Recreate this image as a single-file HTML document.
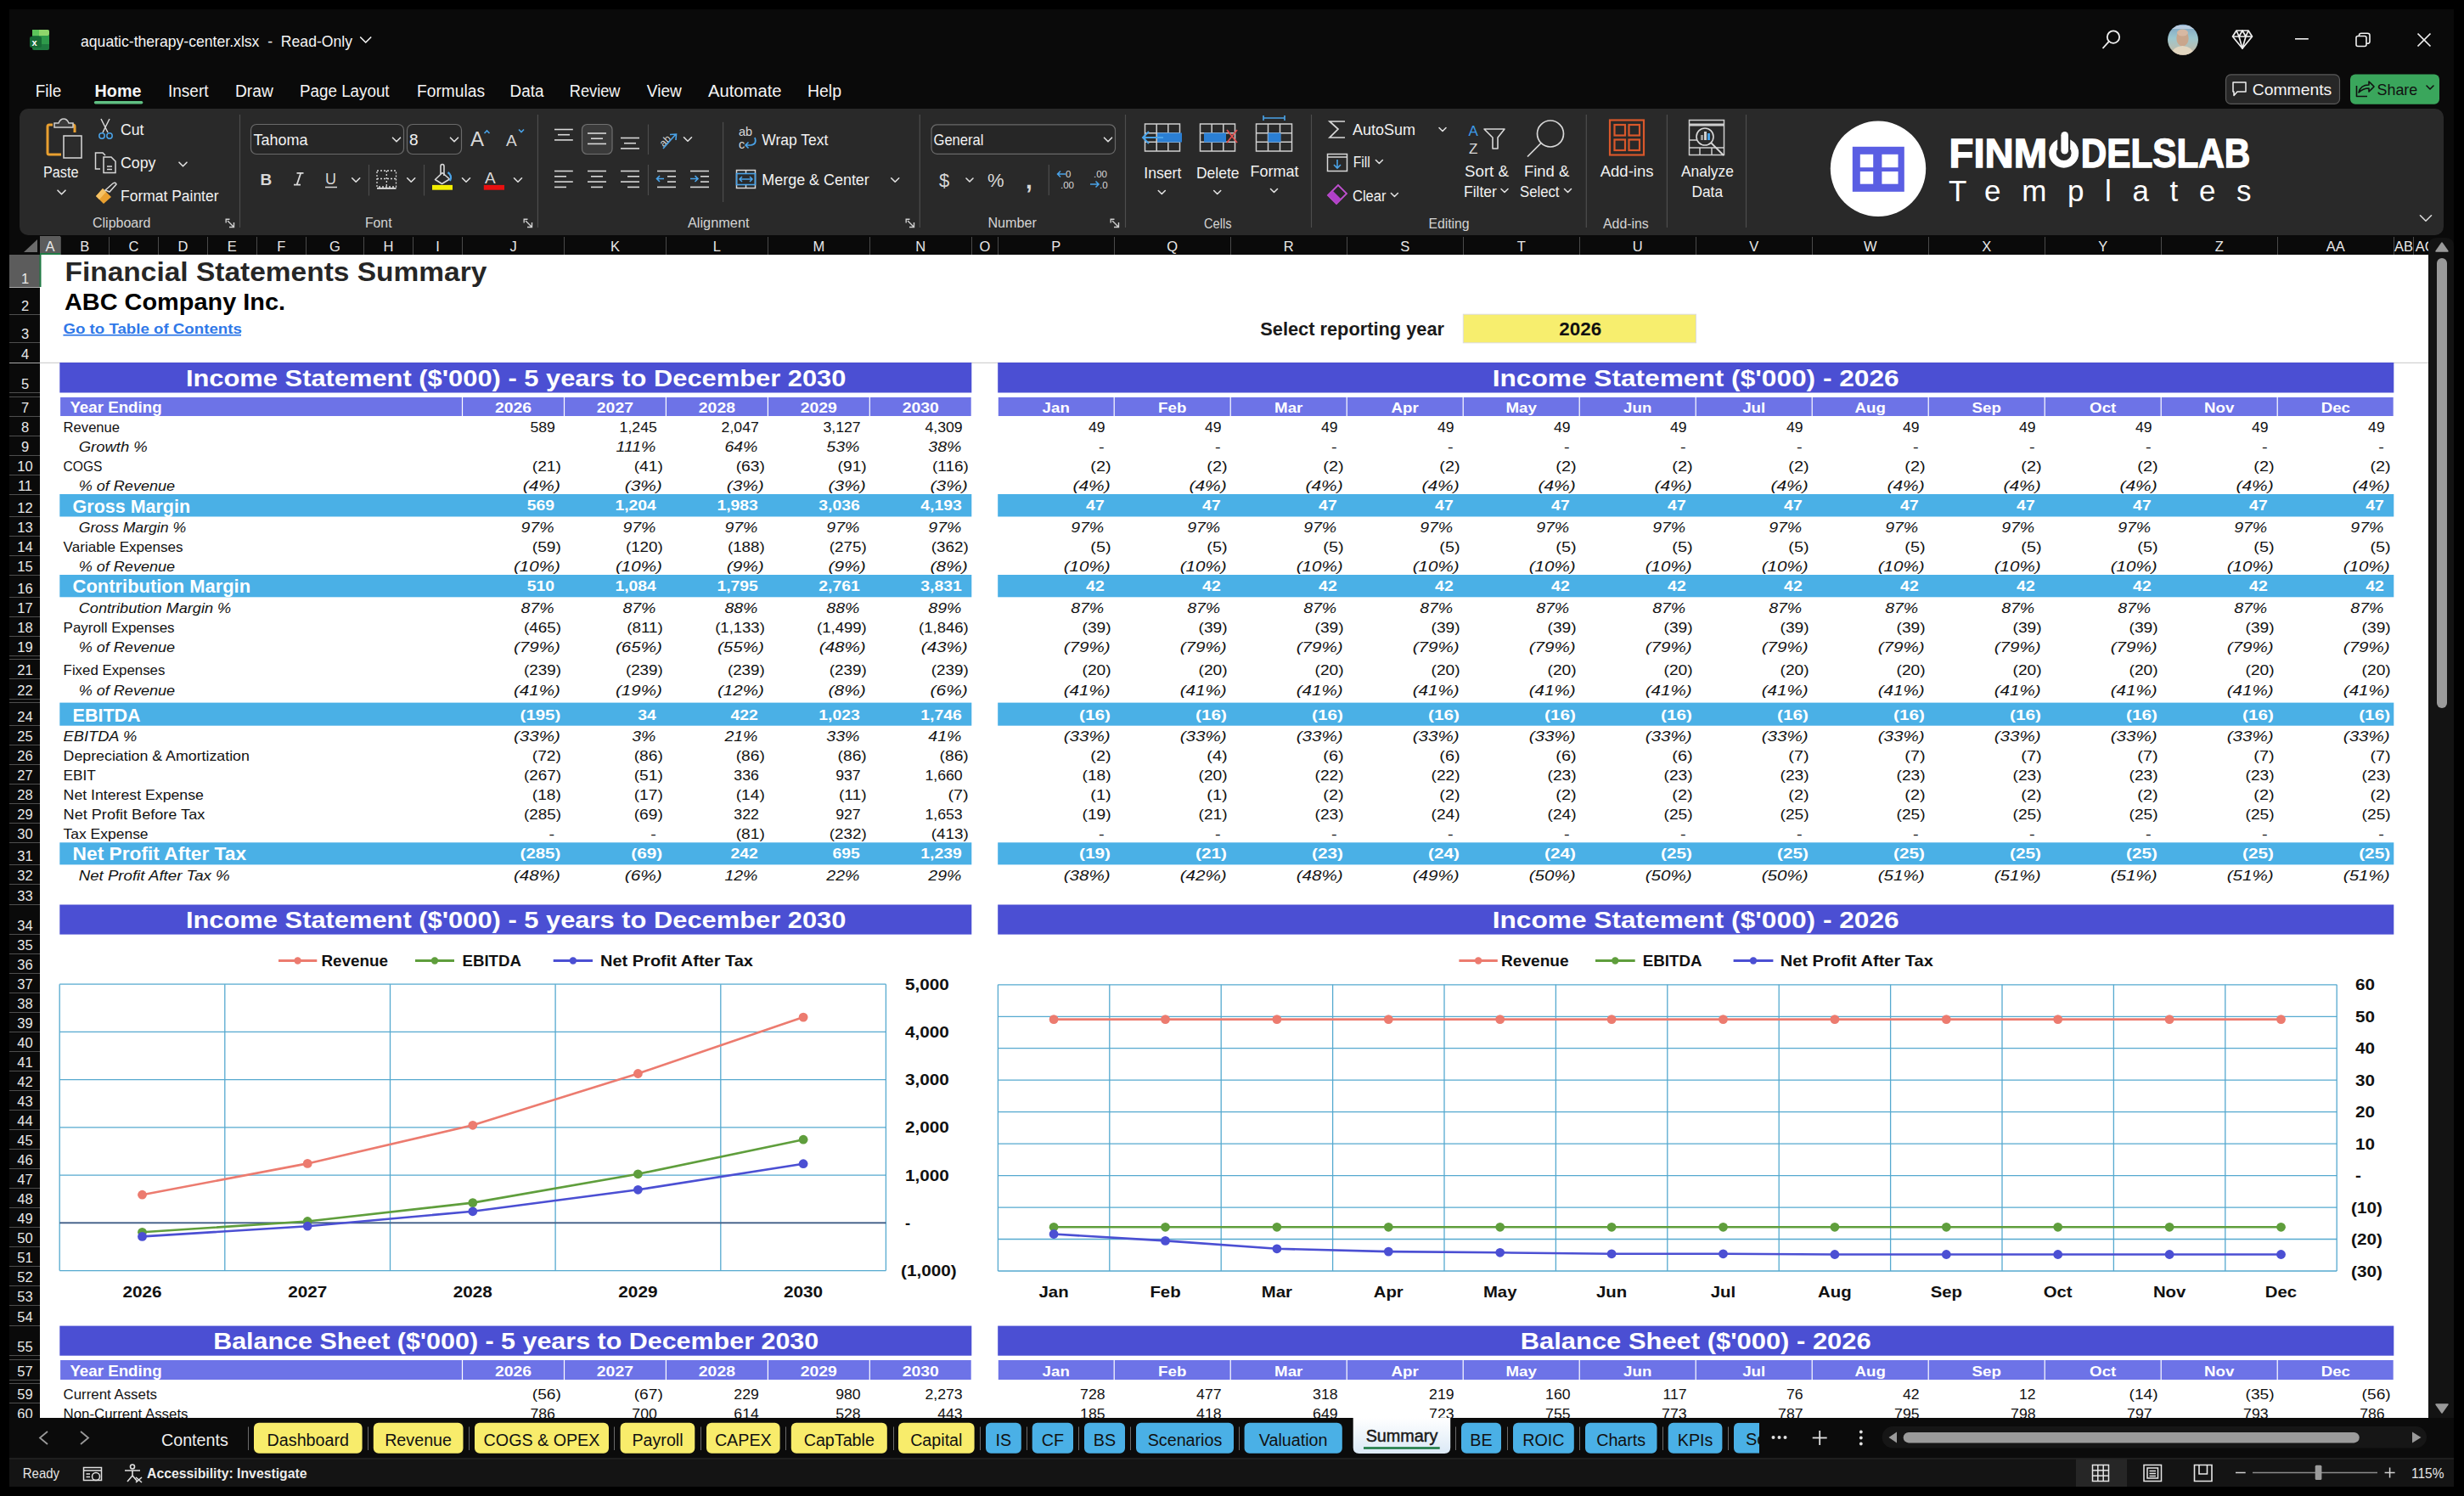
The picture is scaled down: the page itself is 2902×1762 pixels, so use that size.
<!DOCTYPE html><html><head><meta charset="utf-8"><title>aquatic-therapy-center.xlsx</title>
<style>html,body{margin:0;padding:0;background:#000;overflow:hidden;width:2902px;height:1762px;}svg text{font-family:"Liberation Sans",sans-serif;}</style></head><body>
<svg width="2902" height="1762" viewBox="0 0 2902 1762" style="position:absolute;left:0;top:0;font-family:"Liberation Sans", sans-serif">
<rect x="0.0" y="0.0" width="2902.0" height="1762.0" fill="#000" />
<rect x="11.0" y="11.0" width="2879.0" height="1740.0" fill="#0a0a0a" />
<rect x="23" y="128" width="2855" height="149" rx="10" fill="#292929"/>
<g><rect x="38" y="35" width="20" height="24" rx="2" fill="#1f7a3f"/><rect x="38" y="35" width="20" height="7" rx="2" fill="#8fd66b"/><rect x="38" y="35" width="8" height="7" fill="#5bc55a"/><rect x="46" y="42" width="12" height="10" fill="#2e9a4a"/><rect x="35" y="43" width="14" height="13" rx="2" fill="#176b35"/><text x="37.6" y="53.6" font-size="11" font-weight="bold" fill="#fff">x</text></g>
<text x="95.0" y="54.5" font-size="19" fill="#f5f5f5" textLength="320.0" lengthAdjust="spacingAndGlyphs" xml:space="preserve">aquatic-therapy-center.xlsx  -  Read-Only</text>
<path d="M424.7 44.0 L430.7 50.0 L436.7 44.0" fill="none" stroke="#f0f0f0" stroke-width="1.7" stroke-linecap="round" stroke-linejoin="round"/>
<g fill="none" stroke="#f0f0f0" stroke-width="1.8"><circle cx="2489" cy="43.6" r="7.2"/><line x1="2483.8" y1="48.8" x2="2476.5" y2="57"/></g>
<defs><linearGradient id="avg" x1="0" y1="0" x2="0" y2="1"><stop offset="0" stop-color="#7da0c0"/><stop offset="0.45" stop-color="#9cc7cf"/><stop offset="1" stop-color="#c9b8a0"/></linearGradient></defs>
<clipPath id="avc"><circle cx="2571" cy="46.8" r="18"/></clipPath><g clip-path="url(#avc)"><rect x="2553" y="28" width="36" height="37" fill="url(#avg)"/><rect x="2553" y="30" width="36" height="4" fill="#b9cde0"/><ellipse cx="2570.5" cy="45" rx="7.2" ry="9.5" fill="#c9a68c"/><ellipse cx="2570.5" cy="38.5" rx="6.5" ry="4" fill="#d7b8a2"/><path d="M2556 66 Q2558 55 2570.5 54 Q2583 55 2585 66 Z" fill="#e2d6c0"/></g>
<g fill="none" stroke="#f0f0f0" stroke-width="1.7" stroke-linejoin="round"><path d="M2634 36 L2648 36 L2652.5 43 L2641 57 L2629.5 43 Z"/><path d="M2629.5 43 L2652.5 43 M2637 43 L2641 57 L2645 43 M2634 36 L2637 43 L2641 36 L2645 43 L2648 36"/></g>
<line x1="2703.0" y1="45.8" x2="2718.8" y2="45.8" stroke="#f0f0f0" stroke-width="1.6" />
<g fill="none" stroke="#f0f0f0" stroke-width="1.6"><rect x="2775" y="42.5" width="12" height="12" rx="2"/><path d="M2778.5 42.5 L2778.5 41.5 Q2778.5 39.3 2781 39.3 L2788.5 39.3 Q2791 39.3 2791 41.8 L2791 49 Q2791 51.3 2788 51.3 L2787 51.3"/></g>
<g stroke="#f0f0f0" stroke-width="1.7"><line x1="2847.5" y1="39.5" x2="2862.5" y2="54.5"/><line x1="2862.5" y1="39.5" x2="2847.5" y2="54.5"/></g>
<rect x="2621.5" y="87.9" width="134" height="34.5" rx="6" fill="#272727" stroke="#5a5a5a" stroke-width="1.2"/>
<path d="M2630 97 L2645 97 L2645 108 L2635 108 L2631 112.5 L2631 108 L2630 108 Z" fill="none" stroke="#f0f0f0" stroke-width="1.5" stroke-linejoin="round"/>
<text x="2652.7" y="111.5" font-size="19" fill="#f5f5f5" textLength="93.6" lengthAdjust="spacingAndGlyphs">Comments</text>
<rect x="2768" y="87.4" width="105" height="35.4" rx="6" fill="#3aa65c"/>
<g fill="none" stroke="#111" stroke-width="1.6" stroke-linejoin="round"><path d="M2775.5 101 L2775.5 113.5 L2788 113.5"/><path d="M2778 109 Q2780 100 2790 100 L2790 96 L2796 102 L2790 108 L2790 104 Q2783 104 2778 109 Z"/></g>
<text x="2799.5" y="111.5" font-size="19" fill="#111" textLength="47.8" lengthAdjust="spacingAndGlyphs">Share</text>
<path d="M2858.0 101.0 L2862.0 105.0 L2866.0 101.0" fill="none" stroke="#111" stroke-width="1.6" stroke-linecap="round" stroke-linejoin="round"/>
<text x="41.8" y="113.8" font-size="19.5" fill="#f5f5f5" textLength="30.4" lengthAdjust="spacingAndGlyphs">File</text>
<text x="111.6" y="113.8" font-size="19.5" fill="#f5f5f5" font-weight="bold" textLength="54.8" lengthAdjust="spacingAndGlyphs">Home</text>
<text x="198.0" y="113.8" font-size="19.5" fill="#f5f5f5" textLength="47.5" lengthAdjust="spacingAndGlyphs">Insert</text>
<text x="277.0" y="113.8" font-size="19.5" fill="#f5f5f5" textLength="44.8" lengthAdjust="spacingAndGlyphs">Draw</text>
<text x="353.0" y="113.8" font-size="19.5" fill="#f5f5f5" textLength="105.6" lengthAdjust="spacingAndGlyphs">Page Layout</text>
<text x="491.0" y="113.8" font-size="19.5" fill="#f5f5f5" textLength="80.0" lengthAdjust="spacingAndGlyphs">Formulas</text>
<text x="600.6" y="113.8" font-size="19.5" fill="#f5f5f5" textLength="39.8" lengthAdjust="spacingAndGlyphs">Data</text>
<text x="670.8" y="113.8" font-size="19.5" fill="#f5f5f5" textLength="59.7" lengthAdjust="spacingAndGlyphs">Review</text>
<text x="761.8" y="113.8" font-size="19.5" fill="#f5f5f5" textLength="41.0" lengthAdjust="spacingAndGlyphs">View</text>
<text x="834.0" y="113.8" font-size="19.5" fill="#f5f5f5" textLength="86.5" lengthAdjust="spacingAndGlyphs">Automate</text>
<text x="951.0" y="113.8" font-size="19.5" fill="#f5f5f5" textLength="40.0" lengthAdjust="spacingAndGlyphs">Help</text>
<rect x="110.8" y="119" width="57.6" height="3.6" rx="1.8" fill="#5fbf82"/>
<g><path d="M62 147 L58 147 Q56 147 56 149 L56 180 Q56 182 58 182 L72 182" fill="none" stroke="#e9a030" stroke-width="3"/><path d="M82 147 L86 147 Q88 147 88 149 L88 156" fill="none" stroke="#e9a030" stroke-width="3"/><path d="M64 150 L64 145 L69 145 Q71 140 75 140 Q79 140 81 145 L86 145 L86 150 Z" fill="#3a3a3a" stroke="#cfcfcf" stroke-width="1.5"/><rect x="75" y="160" width="21" height="26" fill="#2b2b2b" stroke="#cfcfcf" stroke-width="1.6"/></g>
<text x="51.0" y="209.0" font-size="18" fill="#f2f2f2" textLength="41.5" lengthAdjust="spacingAndGlyphs">Paste</text>
<path d="M68.0 224.2 L72.5 228.8 L77.0 224.2" fill="none" stroke="#e0e0e0" stroke-width="1.6" stroke-linecap="round" stroke-linejoin="round"/>
<g fill="none" stroke-width="1.5"><path d="M119 140 L127 156 M129 140 L121 156" stroke="#d8d8d8"/><circle cx="120" cy="160" r="3.2" stroke="#4aa3e8"/><circle cx="129" cy="160" r="3.2" stroke="#4aa3e8"/></g>
<text x="142.0" y="158.5" font-size="18" fill="#f2f2f2" textLength="27.5" lengthAdjust="spacingAndGlyphs">Cut</text>
<g fill="none" stroke="#d8d8d8" stroke-width="1.5"><path d="M118 199 L112.5 199 L112.5 180 L121 180 L124 183"/><path d="M122 185 L131 185 L136 190 L136 203.5 L122 203.5 Z"/><path d="M126 196 L132 196 M126 199.5 L132 199.5"/></g>
<text x="142.0" y="198.0" font-size="18" fill="#f2f2f2" textLength="41.5" lengthAdjust="spacingAndGlyphs">Copy</text>
<path d="M211.0 191.2 L215.5 195.8 L220.0 191.2" fill="none" stroke="#e0e0e0" stroke-width="1.6" stroke-linecap="round" stroke-linejoin="round"/>
<g><path d="M113 231 L121 222 L131 232 L122 240 Z" fill="#e9a030"/><path d="M113 231 L121 222 L125 226 L117 235 Z" fill="#f5c264"/><path d="M124 224 L133 216 Q136 214 137 217 L129 226 Z" fill="none" stroke="#d8d8d8" stroke-width="1.5"/></g>
<text x="142.0" y="237.0" font-size="18" fill="#f2f2f2" textLength="115.5" lengthAdjust="spacingAndGlyphs">Format Painter</text>
<text x="109.0" y="268.0" font-size="16" fill="#d4d4d4" textLength="68.5" lengthAdjust="spacingAndGlyphs">Clipboard</text>
<g fill="none" stroke="#d0d0d0" stroke-width="1.4"><path d="M270.5 258.2 L266.2 258.2 L266.2 262.5"/><path d="M268.0 260.0 L275.5 267.5 M275.5 262.0 L275.5 267.5 L270.0 267.5"/></g>
<line x1="282.5" y1="135.0" x2="282.5" y2="268.0" stroke="#4d4d4d" stroke-width="1.2" />
<rect x="295.5" y="146.5" width="180" height="35" rx="6.5" fill="#262626" stroke="#6a6a6a" stroke-width="1.2"/>
<text x="298.5" y="171.3" font-size="19" fill="#f2f2f2" textLength="64.0" lengthAdjust="spacingAndGlyphs">Tahoma</text>
<path d="M462.5 162.2 L467.0 166.8 L471.5 162.2" fill="none" stroke="#e0e0e0" stroke-width="1.6" stroke-linecap="round" stroke-linejoin="round"/>
<rect x="479.5" y="146.5" width="64" height="35" rx="6.5" fill="#262626" stroke="#6a6a6a" stroke-width="1.2"/>
<text x="482.0" y="171.3" font-size="19" fill="#f2f2f2" textLength="10.6" lengthAdjust="spacingAndGlyphs">8</text>
<path d="M530.5 162.2 L535.0 166.8 L539.5 162.2" fill="none" stroke="#e0e0e0" stroke-width="1.6" stroke-linecap="round" stroke-linejoin="round"/>
<text x="554.0" y="172.0" font-size="24" fill="#d8d8d8">A</text>
<path d="M570.5 157 L573.5 154 L576.5 157" fill="none" stroke="#4aa3e8" stroke-width="1.6"/>
<text x="596.0" y="172.0" font-size="19" fill="#d8d8d8">A</text>
<path d="M611 152.5 L614 155.5 L617 152.5" fill="none" stroke="#4aa3e8" stroke-width="1.6"/>
<text x="306.5" y="218.3" font-size="19" fill="#d8d8d8" font-weight="bold">B</text>
<path d="M349.5 203.8 L357.5 203.8 M354.3 203.8 L349.6 217.6 M346 217.6 L354 217.6" fill="none" stroke="#d8d8d8" stroke-width="1.8"/>
<text x="383.0" y="216.5" font-size="18" fill="#d8d8d8">U</text>
<line x1="383.0" y1="220.5" x2="397.0" y2="220.5" stroke="#d8d8d8" stroke-width="1.5" />
<path d="M414.7 209.8 L419.2 214.2 L423.7 209.8" fill="none" stroke="#e0e0e0" stroke-width="1.6" stroke-linecap="round" stroke-linejoin="round"/>
<line x1="434.5" y1="194.0" x2="434.5" y2="230.5" stroke="#4d4d4d" stroke-width="1.2" />
<g fill="none" stroke="#d8d8d8" stroke-width="1.3" stroke-dasharray="2 2"><rect x="444" y="201" width="22.5" height="19"/><line x1="455.3" y1="201" x2="455.3" y2="220"/><line x1="444" y1="210.5" x2="466.5" y2="210.5"/></g>
<line x1="444.0" y1="221.8" x2="466.5" y2="221.8" stroke="#e8e8e8" stroke-width="1.8" />
<path d="M479.7 209.8 L484.2 214.2 L488.7 209.8" fill="none" stroke="#e0e0e0" stroke-width="1.6" stroke-linecap="round" stroke-linejoin="round"/>
<line x1="499.5" y1="194.0" x2="499.5" y2="230.5" stroke="#4d4d4d" stroke-width="1.2" />
<g fill="none" stroke="#d8d8d8" stroke-width="1.6" stroke-linejoin="round"><path d="M512.5 211.5 L521 203.5 L529.5 211 L520.5 216.5 Z"/><path d="M519 205 L519 196 Q519 193.5 521 193.5 Q523 193.5 523 196 L523 207"/></g><path d="M527.5 203 Q533 207 530 213" fill="none" stroke="#4aa3e8" stroke-width="2.2"/>
<rect x="509.0" y="217.9" width="24.0" height="5.8" fill="#f3ee00" />
<path d="M544.5 209.8 L549.0 214.2 L553.5 209.8" fill="none" stroke="#e0e0e0" stroke-width="1.6" stroke-linecap="round" stroke-linejoin="round"/>
<text x="571.0" y="215.5" font-size="19" fill="#d8d8d8">A</text>
<rect x="569.8" y="217.9" width="24.2" height="5.8" fill="#e81010" />
<path d="M605.5 209.8 L610.0 214.2 L614.5 209.8" fill="none" stroke="#e0e0e0" stroke-width="1.6" stroke-linecap="round" stroke-linejoin="round"/>
<text x="430.0" y="267.9" font-size="16" fill="#d4d4d4" textLength="31.5" lengthAdjust="spacingAndGlyphs">Font</text>
<g fill="none" stroke="#d0d0d0" stroke-width="1.4"><path d="M621.5 258.2 L617.2 258.2 L617.2 262.5"/><path d="M619.0 260.0 L626.5 267.5 M626.5 262.0 L626.5 267.5 L621.0 267.5"/></g>
<line x1="633.4" y1="135.0" x2="633.4" y2="268.0" stroke="#4d4d4d" stroke-width="1.2" />
<line x1="653.0" y1="152.5" x2="674.8" y2="152.5" stroke="#d8d8d8" stroke-width="1.6" />
<line x1="657.0" y1="158.7" x2="671.0" y2="158.7" stroke="#d8d8d8" stroke-width="1.6" />
<line x1="653.0" y1="164.9" x2="674.8" y2="164.9" stroke="#d8d8d8" stroke-width="1.6" />
<rect x="685.5" y="146.5" width="35.5" height="35" rx="6" fill="#3a3a3a" stroke="#707070" stroke-width="1.2"/>
<line x1="692.0" y1="157.0" x2="714.0" y2="157.0" stroke="#d8d8d8" stroke-width="1.6" />
<line x1="696.0" y1="163.2" x2="710.0" y2="163.2" stroke="#d8d8d8" stroke-width="1.6" />
<line x1="692.0" y1="169.4" x2="714.0" y2="169.4" stroke="#d8d8d8" stroke-width="1.6" />
<line x1="731.0" y1="162.5" x2="753.0" y2="162.5" stroke="#d8d8d8" stroke-width="1.6" />
<line x1="735.0" y1="168.7" x2="749.0" y2="168.7" stroke="#d8d8d8" stroke-width="1.6" />
<line x1="731.0" y1="174.9" x2="753.0" y2="174.9" stroke="#d8d8d8" stroke-width="1.6" />
<line x1="763.5" y1="146.5" x2="763.5" y2="182.0" stroke="#4d4d4d" stroke-width="1.2" />
<g><text x="775" y="172" font-size="12" fill="#d8d8d8" transform="rotate(-45 780 165)">ab</text><path d="M781 175 L796 158 M789 158.5 L796.5 158 L796 165" fill="none" stroke="#4aa3e8" stroke-width="1.6"/></g>
<path d="M805.5 161.8 L810.0 166.2 L814.5 161.8" fill="none" stroke="#e0e0e0" stroke-width="1.6" stroke-linecap="round" stroke-linejoin="round"/>
<line x1="851.6" y1="143.7" x2="851.6" y2="238.0" stroke="#4d4d4d" stroke-width="1.2" />
<line x1="653.0" y1="201.5" x2="674.8" y2="201.5" stroke="#d8d8d8" stroke-width="1.6" />
<line x1="653.0" y1="207.8" x2="667.0" y2="207.8" stroke="#d8d8d8" stroke-width="1.6" />
<line x1="653.0" y1="214.1" x2="674.8" y2="214.1" stroke="#d8d8d8" stroke-width="1.6" />
<line x1="653.0" y1="220.4" x2="667.0" y2="220.4" stroke="#d8d8d8" stroke-width="1.6" />
<line x1="692.0" y1="201.5" x2="714.0" y2="201.5" stroke="#d8d8d8" stroke-width="1.6" />
<line x1="696.0" y1="207.8" x2="710.0" y2="207.8" stroke="#d8d8d8" stroke-width="1.6" />
<line x1="692.0" y1="214.1" x2="714.0" y2="214.1" stroke="#d8d8d8" stroke-width="1.6" />
<line x1="696.0" y1="220.4" x2="710.0" y2="220.4" stroke="#d8d8d8" stroke-width="1.6" />
<line x1="731.0" y1="201.5" x2="753.0" y2="201.5" stroke="#d8d8d8" stroke-width="1.6" />
<line x1="739.0" y1="207.8" x2="753.0" y2="207.8" stroke="#d8d8d8" stroke-width="1.6" />
<line x1="731.0" y1="214.1" x2="753.0" y2="214.1" stroke="#d8d8d8" stroke-width="1.6" />
<line x1="739.0" y1="220.4" x2="753.0" y2="220.4" stroke="#d8d8d8" stroke-width="1.6" />
<line x1="763.5" y1="194.0" x2="763.5" y2="230.0" stroke="#4d4d4d" stroke-width="1.2" />
<line x1="774.0" y1="201.5" x2="796.0" y2="201.5" stroke="#d8d8d8" stroke-width="1.6" />
<line x1="786.0" y1="207.8" x2="796.0" y2="207.8" stroke="#d8d8d8" stroke-width="1.6" />
<line x1="786.0" y1="214.1" x2="796.0" y2="214.1" stroke="#d8d8d8" stroke-width="1.6" />
<line x1="774.0" y1="220.4" x2="796.0" y2="220.4" stroke="#d8d8d8" stroke-width="1.6" />
<path d="M773.5 210.5 L782 210.5 M777 207 L773.5 210.5 L777 214" fill="none" stroke="#4aa3e8" stroke-width="1.6"/>
<line x1="813.0" y1="201.5" x2="835.0" y2="201.5" stroke="#d8d8d8" stroke-width="1.6" />
<line x1="825.0" y1="207.8" x2="835.0" y2="207.8" stroke="#d8d8d8" stroke-width="1.6" />
<line x1="825.0" y1="214.1" x2="835.0" y2="214.1" stroke="#d8d8d8" stroke-width="1.6" />
<line x1="813.0" y1="220.4" x2="835.0" y2="220.4" stroke="#d8d8d8" stroke-width="1.6" />
<path d="M813 210.5 L822 210.5 M818.5 207 L822 210.5 L818.5 214" fill="none" stroke="#4aa3e8" stroke-width="1.6"/>
<g><text x="870" y="160" font-size="14.5" fill="#d8d8d8">ab</text><text x="870" y="174.5" font-size="14.5" fill="#d8d8d8">c</text><path d="M889 162 Q892 170 884 171 L878 171 M881.5 167.5 L878 171 L881.5 174.5" fill="none" stroke="#4aa3e8" stroke-width="1.7"/></g>
<text x="897.3" y="170.7" font-size="18" fill="#f2f2f2" textLength="78.0" lengthAdjust="spacingAndGlyphs">Wrap Text</text>
<g fill="none" stroke="#d8d8d8" stroke-width="1.5"><rect x="867.5" y="200.5" width="22" height="21"/><line x1="878.5" y1="200.5" x2="878.5" y2="204"/><line x1="878.5" y1="218" x2="878.5" y2="221.5"/></g><rect x="867.5" y="204.5" width="22" height="13" fill="none" stroke="#4aa3e8" stroke-width="1.6"/><path d="M871 211 L886 211 M874 208 L871 211 L874 214 M883 208 L886 211 L883 214" fill="none" stroke="#4aa3e8" stroke-width="1.5"/>
<text x="897.3" y="218.3" font-size="18" fill="#f2f2f2" textLength="126.5" lengthAdjust="spacingAndGlyphs">Merge &amp; Center</text>
<path d="M1049.7 209.8 L1054.2 214.2 L1058.7 209.8" fill="none" stroke="#e0e0e0" stroke-width="1.6" stroke-linecap="round" stroke-linejoin="round"/>
<text x="810.0" y="267.8" font-size="16" fill="#d4d4d4" textLength="72.5" lengthAdjust="spacingAndGlyphs">Alignment</text>
<g fill="none" stroke="#d0d0d0" stroke-width="1.4"><path d="M1071.5 258.2 L1067.2 258.2 L1067.2 262.5"/><path d="M1069.0 260.0 L1076.5 267.5 M1076.5 262.0 L1076.5 267.5 L1071.0 267.5"/></g>
<line x1="1083.3" y1="135.0" x2="1083.3" y2="268.0" stroke="#4d4d4d" stroke-width="1.2" />
<rect x="1097" y="146.8" width="216.5" height="34.5" rx="6.5" fill="#262626" stroke="#6a6a6a" stroke-width="1.2"/>
<text x="1099.5" y="171.0" font-size="19" fill="#f2f2f2" textLength="59.0" lengthAdjust="spacingAndGlyphs">General</text>
<path d="M1300.5 162.2 L1305.0 166.8 L1309.5 162.2" fill="none" stroke="#e0e0e0" stroke-width="1.6" stroke-linecap="round" stroke-linejoin="round"/>
<text x="1106.0" y="219.5" font-size="22" fill="#d8d8d8">$</text>
<path d="M1138.0 210.0 L1142.0 214.0 L1146.0 210.0" fill="none" stroke="#e0e0e0" stroke-width="1.6" stroke-linecap="round" stroke-linejoin="round"/>
<text x="1163.0" y="219.5" font-size="22" fill="#d8d8d8">%</text>
<text x="1208.0" y="222.0" font-size="28" fill="#d8d8d8" font-weight="bold">,</text>
<line x1="1235.3" y1="194.0" x2="1235.3" y2="230.0" stroke="#4d4d4d" stroke-width="1.2" />
<g><text x="1255" y="209" font-size="11.5" fill="#d8d8d8">0</text><text x="1249" y="222" font-size="11.5" fill="#d8d8d8">.00</text><path d="M1255 205 L1245.5 205 M1249 201.5 L1245.5 205 L1249 208.5" fill="none" stroke="#4aa3e8" stroke-width="1.5"/></g>
<g><text x="1288" y="209" font-size="11.5" fill="#d8d8d8">.00</text><text x="1295" y="222" font-size="11.5" fill="#d8d8d8">.0</text><path d="M1284 217 L1294 217 M1290.5 213.5 L1294 217 L1290.5 220.5" fill="none" stroke="#4aa3e8" stroke-width="1.5"/></g>
<text x="1163.4" y="268.0" font-size="16" fill="#d4d4d4" textLength="57.5" lengthAdjust="spacingAndGlyphs">Number</text>
<g fill="none" stroke="#d0d0d0" stroke-width="1.4"><path d="M1312.5 258.2 L1308.2 258.2 L1308.2 262.5"/><path d="M1310.0 260.0 L1317.5 267.5 M1317.5 262.0 L1317.5 267.5 L1312.0 267.5"/></g>
<line x1="1325.5" y1="135.0" x2="1325.5" y2="268.0" stroke="#4d4d4d" stroke-width="1.2" />
<g fill="none" stroke="#cfcfcf" stroke-width="1.5"><rect x="1348.5" y="146" width="41" height="32"/><line x1="1362.2" y1="146" x2="1362.2" y2="178"/><line x1="1375.8" y1="146" x2="1375.8" y2="178"/><line x1="1348.5" y1="156.7" x2="1389.5" y2="156.7"/><line x1="1348.5" y1="167.3" x2="1389.5" y2="167.3"/></g>
<rect x="1363" y="156.5" width="29" height="11" fill="#2b7fd4"/><path d="M1370 162 L1346 162 M1353 155 L1346 162 L1353 169" fill="none" stroke="#4aa3e8" stroke-width="2"/>
<text x="1347.3" y="210.0" font-size="18.5" fill="#f2f2f2" textLength="44.0" lengthAdjust="spacingAndGlyphs">Insert</text>
<path d="M1364.3 224.5 L1368.3 228.5 L1372.3 224.5" fill="none" stroke="#e0e0e0" stroke-width="1.6" stroke-linecap="round" stroke-linejoin="round"/>
<g fill="none" stroke="#cfcfcf" stroke-width="1.5"><rect x="1413.5" y="146" width="41" height="32"/><line x1="1427.2" y1="146" x2="1427.2" y2="178"/><line x1="1440.8" y1="146" x2="1440.8" y2="178"/><line x1="1413.5" y1="156.7" x2="1454.5" y2="156.7"/><line x1="1413.5" y1="167.3" x2="1454.5" y2="167.3"/></g>
<rect x="1418" y="156.5" width="26" height="11" fill="#2b7fd4"/><path d="M1445 153 L1457 168 M1457 153 L1445 168" stroke="#e05050" stroke-width="1.8"/>
<text x="1409.0" y="210.0" font-size="18.5" fill="#f2f2f2" textLength="50.5" lengthAdjust="spacingAndGlyphs">Delete</text>
<path d="M1429.7 224.5 L1433.7 228.5 L1437.7 224.5" fill="none" stroke="#e0e0e0" stroke-width="1.6" stroke-linecap="round" stroke-linejoin="round"/>
<g fill="none" stroke="#cfcfcf" stroke-width="1.5"><rect x="1479.5" y="146" width="42" height="32"/><line x1="1493.5" y1="146" x2="1493.5" y2="178"/><line x1="1507.5" y1="146" x2="1507.5" y2="178"/><line x1="1479.5" y1="156.7" x2="1521.5" y2="156.7"/><line x1="1479.5" y1="167.3" x2="1521.5" y2="167.3"/></g>
<rect x="1493.5" y="156.5" width="15" height="11" fill="#2b7fd4"/><path d="M1488 139 L1513 139 M1488 136 L1488 142 M1513 136 L1513 142" stroke="#4aa3e8" stroke-width="1.6"/>
<text x="1472.5" y="207.8" font-size="18.5" fill="#f2f2f2" textLength="57.0" lengthAdjust="spacingAndGlyphs">Format</text>
<path d="M1496.5 222.5 L1500.5 226.5 L1504.5 222.5" fill="none" stroke="#e0e0e0" stroke-width="1.6" stroke-linecap="round" stroke-linejoin="round"/>
<text x="1418.0" y="268.8" font-size="16" fill="#d4d4d4" textLength="32.5" lengthAdjust="spacingAndGlyphs">Cells</text>
<line x1="1544.5" y1="135.0" x2="1544.5" y2="268.0" stroke="#4d4d4d" stroke-width="1.2" />
<path d="M1584 143 L1566 143 L1576 152 L1566 162 L1584 162" fill="none" stroke="#d8d8d8" stroke-width="1.7"/>
<text x="1593.0" y="159.0" font-size="18" fill="#f2f2f2" textLength="74.0" lengthAdjust="spacingAndGlyphs">AutoSum</text>
<path d="M1695.0 150.5 L1699.0 154.5 L1703.0 150.5" fill="none" stroke="#e0e0e0" stroke-width="1.6" stroke-linecap="round" stroke-linejoin="round"/>
<g fill="none" stroke="#d8d8d8" stroke-width="1.5"><rect x="1563.5" y="181.5" width="23" height="20"/><line x1="1563.5" y1="185" x2="1586.5" y2="185"/></g><path d="M1575 188 L1575 198 M1571 194 L1575 198 L1579 194" fill="none" stroke="#4aa3e8" stroke-width="1.6"/>
<text x="1593.7" y="197.3" font-size="18" fill="#f2f2f2" textLength="20.0" lengthAdjust="spacingAndGlyphs">Fill</text>
<path d="M1620.4 188.5 L1624.4 192.5 L1628.4 188.5" fill="none" stroke="#e0e0e0" stroke-width="1.6" stroke-linecap="round" stroke-linejoin="round"/>
<path d="M1564 230 L1576 218 L1586 228 L1574 240 Z" fill="none" stroke="#c050d0" stroke-width="1.8"/><path d="M1564 230 L1569.5 224.5 L1579.5 234.5 L1574 240 Z" fill="#b040c8"/>
<text x="1593.0" y="236.8" font-size="18" fill="#f2f2f2" textLength="39.5" lengthAdjust="spacingAndGlyphs">Clear</text>
<path d="M1638.4 227.5 L1642.4 231.5 L1646.4 227.5" fill="none" stroke="#e0e0e0" stroke-width="1.6" stroke-linecap="round" stroke-linejoin="round"/>
<text x="1729.5" y="160.0" font-size="17" fill="#3d9be9">A</text>
<text x="1730.0" y="181.0" font-size="17" fill="#d8d8d8">Z</text>
<path d="M1748 152 L1772 152 L1764 162 L1764 175 L1758 175 L1758 162 Z" fill="none" stroke="#d8d8d8" stroke-width="1.6" stroke-linejoin="round"/>
<text x="1725.0" y="208.3" font-size="18.5" fill="#f2f2f2" textLength="52.0" lengthAdjust="spacingAndGlyphs">Sort &amp;</text>
<text x="1724.0" y="231.7" font-size="18.5" fill="#f2f2f2" textLength="38.8" lengthAdjust="spacingAndGlyphs">Filter</text>
<path d="M1768.0 222.5 L1772.0 226.5 L1776.0 222.5" fill="none" stroke="#e0e0e0" stroke-width="1.6" stroke-linecap="round" stroke-linejoin="round"/>
<g fill="none" stroke="#d8d8d8" stroke-width="1.7"><circle cx="1826" cy="157.5" r="15.5"/><line x1="1815" y1="168.5" x2="1799" y2="184.5"/></g>
<text x="1795.0" y="208.3" font-size="18.5" fill="#f2f2f2" textLength="53.3" lengthAdjust="spacingAndGlyphs">Find &amp;</text>
<text x="1790.0" y="231.7" font-size="18.5" fill="#f2f2f2" textLength="46.5" lengthAdjust="spacingAndGlyphs">Select</text>
<path d="M1842.5 222.5 L1846.5 226.5 L1850.5 222.5" fill="none" stroke="#e0e0e0" stroke-width="1.6" stroke-linecap="round" stroke-linejoin="round"/>
<text x="1682.4" y="268.5" font-size="16" fill="#d4d4d4" textLength="48.2" lengthAdjust="spacingAndGlyphs">Editing</text>
<line x1="1868.3" y1="135.0" x2="1868.3" y2="268.0" stroke="#4d4d4d" stroke-width="1.2" />
<g fill="none" stroke="#d9582b" stroke-width="2.2"><rect x="1896" y="141.5" width="40" height="41"/><rect x="1901.5" y="147" width="12.5" height="12.5"/><rect x="1918.5" y="147" width="12.5" height="12.5"/><rect x="1901.5" y="164.5" width="12.5" height="12.5"/><rect x="1918.5" y="164.5" width="12.5" height="12.5"/></g>
<text x="1884.7" y="208.3" font-size="18.5" fill="#f2f2f2" textLength="62.8" lengthAdjust="spacingAndGlyphs">Add-ins</text>
<text x="1888.0" y="268.5" font-size="16" fill="#d4d4d4" textLength="53.8" lengthAdjust="spacingAndGlyphs">Add-ins</text>
<line x1="1963.4" y1="135.0" x2="1963.4" y2="268.0" stroke="#4d4d4d" stroke-width="1.2" />
<g fill="none" stroke="#cfcfcf" stroke-width="1.5"><rect x="1989.5" y="141.5" width="41" height="41"/><line x1="1989.5" y1="147" x2="2030.5" y2="147" stroke-width="3"/><line x1="1989.5" y1="165" x2="2000" y2="165"/><line x1="1989.5" y1="174" x2="2030.5" y2="174"/><line x1="2002" y1="174" x2="2002" y2="182.5"/><line x1="2016" y1="174" x2="2016" y2="182.5"/></g><circle cx="2008" cy="161" r="10" fill="#2b2b2b" stroke="#d8d8d8" stroke-width="1.6"/><line x1="2015" y1="168" x2="2030" y2="183" stroke="#d8d8d8" stroke-width="1.8"/><rect x="2003" y="159" width="3" height="6" fill="#9a9a9a"/><rect x="2007" y="155" width="3" height="10" fill="#cfcfcf"/><rect x="2011" y="157" width="3" height="8" fill="#4aa3e8"/>
<text x="1980.0" y="208.3" font-size="18.5" fill="#f2f2f2" textLength="61.8" lengthAdjust="spacingAndGlyphs">Analyze</text>
<text x="1992.5" y="231.7" font-size="18.5" fill="#f2f2f2" textLength="36.5" lengthAdjust="spacingAndGlyphs">Data</text>
<line x1="2056.5" y1="135.0" x2="2056.5" y2="268.0" stroke="#4d4d4d" stroke-width="1.2" />
<circle cx="2212" cy="198.8" r="56.2" fill="#ffffff"/>
<rect x="2181.8" y="172.8" width="61" height="53" fill="#5a5ee3"/>
<rect x="2190.8" y="181.8" width="15.4" height="15.4" fill="#ffffff" />
<rect x="2216.4" y="181.8" width="19.1" height="15.4" fill="#ffffff" />
<rect x="2190.8" y="202.0" width="15.4" height="14.7" fill="#ffffff" />
<rect x="2216.4" y="202.0" width="19.1" height="14.7" fill="#ffffff" />
<text x="2295.6" y="197.3" font-size="47.5" fill="#ffffff" font-weight="bold" textLength="115.5" lengthAdjust="spacingAndGlyphs" stroke="#ffffff" stroke-width="1.4">FINM</text>
<text x="2450.8" y="197.3" font-size="47.5" fill="#ffffff" font-weight="bold" textLength="199.5" lengthAdjust="spacingAndGlyphs" stroke="#ffffff" stroke-width="1.4">DELSLAB</text>
<circle cx="2430.7" cy="180.2" r="13.2" fill="none" stroke="#ffffff" stroke-width="8.6"/>
<rect x="2423.2" y="158" width="15" height="17" fill="#292929"/>
<rect x="2427.4" y="155" width="8.6" height="26.5" rx="4.3" fill="#ffffff"/>
<text x="2295" y="236.7" font-size="35" fill="#ffffff" textLength="356.5" lengthAdjust="spacing">Templates</text>
<path d="M2850.5 253.8 L2857.0 260.2 L2863.5 253.8" fill="none" stroke="#d8d8d8" stroke-width="1.6" stroke-linecap="round" stroke-linejoin="round"/>
<rect x="47.0" y="300.0" width="2813.0" height="1370.0" fill="#ffffff" />
<rect x="11.0" y="278.0" width="2849.0" height="22.0" fill="#0a0a0a" />
<path d="M28 297 L44 297 L44 282 Z" fill="#6b6b6b"/>
<rect x="47.0" y="278.0" width="24.1" height="22.0" fill="#5c5c5c" />
<line x1="47.0" y1="299.0" x2="71.1" y2="299.0" stroke="#217a45" stroke-width="2" />
<line x1="71.5" y1="279.0" x2="71.5" y2="300.0" stroke="#8a8a8a" stroke-width="1" />
<text x="59.0" y="295.5" font-size="16.5" fill="#e8e8e8" text-anchor="middle">A</text>
<line x1="71.5" y1="279.0" x2="71.5" y2="300.0" stroke="#4a4a4a" stroke-width="1" />
<text x="99.8" y="295.5" font-size="16.5" fill="#e8e8e8" text-anchor="middle">B</text>
<line x1="128.5" y1="279.0" x2="128.5" y2="300.0" stroke="#4a4a4a" stroke-width="1" />
<text x="157.4" y="295.5" font-size="16.5" fill="#e8e8e8" text-anchor="middle">C</text>
<line x1="186.5" y1="279.0" x2="186.5" y2="300.0" stroke="#4a4a4a" stroke-width="1" />
<text x="215.4" y="295.5" font-size="16.5" fill="#e8e8e8" text-anchor="middle">D</text>
<line x1="244.5" y1="279.0" x2="244.5" y2="300.0" stroke="#4a4a4a" stroke-width="1" />
<text x="273.3" y="295.5" font-size="16.5" fill="#e8e8e8" text-anchor="middle">E</text>
<line x1="302.5" y1="279.0" x2="302.5" y2="300.0" stroke="#4a4a4a" stroke-width="1" />
<text x="331.2" y="295.5" font-size="16.5" fill="#e8e8e8" text-anchor="middle">F</text>
<line x1="360.5" y1="279.0" x2="360.5" y2="300.0" stroke="#4a4a4a" stroke-width="1" />
<text x="394.3" y="295.5" font-size="16.5" fill="#e8e8e8" text-anchor="middle">G</text>
<line x1="428.5" y1="279.0" x2="428.5" y2="300.0" stroke="#4a4a4a" stroke-width="1" />
<text x="457.4" y="295.5" font-size="16.5" fill="#e8e8e8" text-anchor="middle">H</text>
<line x1="486.5" y1="279.0" x2="486.5" y2="300.0" stroke="#4a4a4a" stroke-width="1" />
<text x="515.5" y="295.5" font-size="16.5" fill="#e8e8e8" text-anchor="middle">I</text>
<line x1="544.5" y1="279.0" x2="544.5" y2="300.0" stroke="#4a4a4a" stroke-width="1" />
<text x="604.5" y="295.5" font-size="16.5" fill="#e8e8e8" text-anchor="middle">J</text>
<line x1="664.5" y1="279.0" x2="664.5" y2="300.0" stroke="#4a4a4a" stroke-width="1" />
<text x="724.4" y="295.5" font-size="16.5" fill="#e8e8e8" text-anchor="middle">K</text>
<line x1="784.5" y1="279.0" x2="784.5" y2="300.0" stroke="#4a4a4a" stroke-width="1" />
<text x="844.4" y="295.5" font-size="16.5" fill="#e8e8e8" text-anchor="middle">L</text>
<line x1="904.5" y1="279.0" x2="904.5" y2="300.0" stroke="#4a4a4a" stroke-width="1" />
<text x="964.3" y="295.5" font-size="16.5" fill="#e8e8e8" text-anchor="middle">M</text>
<line x1="1024.5" y1="279.0" x2="1024.5" y2="300.0" stroke="#4a4a4a" stroke-width="1" />
<text x="1084.3" y="295.5" font-size="16.5" fill="#e8e8e8" text-anchor="middle">N</text>
<line x1="1144.5" y1="279.0" x2="1144.5" y2="300.0" stroke="#4a4a4a" stroke-width="1" />
<text x="1159.8" y="295.5" font-size="16.5" fill="#e8e8e8" text-anchor="middle">O</text>
<line x1="1175.5" y1="279.0" x2="1175.5" y2="300.0" stroke="#4a4a4a" stroke-width="1" />
<text x="1243.7" y="295.5" font-size="16.5" fill="#e8e8e8" text-anchor="middle">P</text>
<line x1="1312.5" y1="279.0" x2="1312.5" y2="300.0" stroke="#4a4a4a" stroke-width="1" />
<text x="1380.7" y="295.5" font-size="16.5" fill="#e8e8e8" text-anchor="middle">Q</text>
<line x1="1449.5" y1="279.0" x2="1449.5" y2="300.0" stroke="#4a4a4a" stroke-width="1" />
<text x="1517.7" y="295.5" font-size="16.5" fill="#e8e8e8" text-anchor="middle">R</text>
<line x1="1586.5" y1="279.0" x2="1586.5" y2="300.0" stroke="#4a4a4a" stroke-width="1" />
<text x="1654.7" y="295.5" font-size="16.5" fill="#e8e8e8" text-anchor="middle">S</text>
<line x1="1723.5" y1="279.0" x2="1723.5" y2="300.0" stroke="#4a4a4a" stroke-width="1" />
<text x="1791.7" y="295.5" font-size="16.5" fill="#e8e8e8" text-anchor="middle">T</text>
<line x1="1860.5" y1="279.0" x2="1860.5" y2="300.0" stroke="#4a4a4a" stroke-width="1" />
<text x="1928.7" y="295.5" font-size="16.5" fill="#e8e8e8" text-anchor="middle">U</text>
<line x1="1997.5" y1="279.0" x2="1997.5" y2="300.0" stroke="#4a4a4a" stroke-width="1" />
<text x="2065.7" y="295.5" font-size="16.5" fill="#e8e8e8" text-anchor="middle">V</text>
<line x1="2134.5" y1="279.0" x2="2134.5" y2="300.0" stroke="#4a4a4a" stroke-width="1" />
<text x="2202.7" y="295.5" font-size="16.5" fill="#e8e8e8" text-anchor="middle">W</text>
<line x1="2271.5" y1="279.0" x2="2271.5" y2="300.0" stroke="#4a4a4a" stroke-width="1" />
<text x="2339.7" y="295.5" font-size="16.5" fill="#e8e8e8" text-anchor="middle">X</text>
<line x1="2408.5" y1="279.0" x2="2408.5" y2="300.0" stroke="#4a4a4a" stroke-width="1" />
<text x="2476.7" y="295.5" font-size="16.5" fill="#e8e8e8" text-anchor="middle">Y</text>
<line x1="2545.5" y1="279.0" x2="2545.5" y2="300.0" stroke="#4a4a4a" stroke-width="1" />
<text x="2613.7" y="295.5" font-size="16.5" fill="#e8e8e8" text-anchor="middle">Z</text>
<line x1="2682.5" y1="279.0" x2="2682.5" y2="300.0" stroke="#4a4a4a" stroke-width="1" />
<text x="2750.8" y="295.5" font-size="16.5" fill="#e8e8e8" text-anchor="middle">AA</text>
<line x1="2819.5" y1="279.0" x2="2819.5" y2="300.0" stroke="#4a4a4a" stroke-width="1" />
<text x="2831.0" y="295.5" font-size="16.5" fill="#e8e8e8" text-anchor="middle">AB</text>
<line x1="2842.5" y1="279.0" x2="2842.5" y2="300.0" stroke="#4a4a4a" stroke-width="1" />
<svg x="2842.7" y="278" width="17.3" height="22" overflow="hidden"><text x="2" y="17.5" font-size="16.5" fill="#e8e8e8">AC</text></svg>
<rect x="11.0" y="300.0" width="36.0" height="1370.0" fill="#0a0a0a" />
<rect x="11.0" y="300.0" width="36.0" height="38.0" fill="#5c5c5c" />
<line x1="47.5" y1="300.0" x2="47.5" y2="338.0" stroke="#217a45" stroke-width="2" />
<line x1="11.0" y1="338.5" x2="47.0" y2="338.5" stroke="#a8a8a8" stroke-width="1" />
<line x1="11.0" y1="370.5" x2="47.0" y2="370.5" stroke="#4e4e4e" stroke-width="1" />
<line x1="11.0" y1="403.5" x2="47.0" y2="403.5" stroke="#4e4e4e" stroke-width="1" />
<line x1="11.0" y1="427.5" x2="47.0" y2="427.5" stroke="#a8a8a8" stroke-width="1" />
<line x1="11.0" y1="462.5" x2="47.0" y2="462.5" stroke="#4e4e4e" stroke-width="1" />
<line x1="11.0" y1="467.5" x2="47.0" y2="467.5" stroke="#4e4e4e" stroke-width="1" />
<line x1="11.0" y1="490.5" x2="47.0" y2="490.5" stroke="#4e4e4e" stroke-width="1" />
<line x1="11.0" y1="513.5" x2="47.0" y2="513.5" stroke="#4e4e4e" stroke-width="1" />
<line x1="11.0" y1="536.5" x2="47.0" y2="536.5" stroke="#4e4e4e" stroke-width="1" />
<line x1="11.0" y1="559.5" x2="47.0" y2="559.5" stroke="#4e4e4e" stroke-width="1" />
<line x1="11.0" y1="582.5" x2="47.0" y2="582.5" stroke="#4e4e4e" stroke-width="1" />
<line x1="11.0" y1="608.5" x2="47.0" y2="608.5" stroke="#4e4e4e" stroke-width="1" />
<line x1="11.0" y1="631.5" x2="47.0" y2="631.5" stroke="#4e4e4e" stroke-width="1" />
<line x1="11.0" y1="654.5" x2="47.0" y2="654.5" stroke="#4e4e4e" stroke-width="1" />
<line x1="11.0" y1="677.5" x2="47.0" y2="677.5" stroke="#4e4e4e" stroke-width="1" />
<line x1="11.0" y1="703.5" x2="47.0" y2="703.5" stroke="#4e4e4e" stroke-width="1" />
<line x1="11.0" y1="726.5" x2="47.0" y2="726.5" stroke="#4e4e4e" stroke-width="1" />
<line x1="11.0" y1="749.5" x2="47.0" y2="749.5" stroke="#4e4e4e" stroke-width="1" />
<line x1="11.0" y1="772.5" x2="47.0" y2="772.5" stroke="#4e4e4e" stroke-width="1" />
<line x1="11.0" y1="776.5" x2="47.0" y2="776.5" stroke="#4e4e4e" stroke-width="1" />
<line x1="11.0" y1="799.5" x2="47.0" y2="799.5" stroke="#4e4e4e" stroke-width="1" />
<line x1="11.0" y1="823.5" x2="47.0" y2="823.5" stroke="#4e4e4e" stroke-width="1" />
<line x1="11.0" y1="827.5" x2="47.0" y2="827.5" stroke="#4e4e4e" stroke-width="1" />
<line x1="11.0" y1="854.5" x2="47.0" y2="854.5" stroke="#4e4e4e" stroke-width="1" />
<line x1="11.0" y1="877.5" x2="47.0" y2="877.5" stroke="#4e4e4e" stroke-width="1" />
<line x1="11.0" y1="900.5" x2="47.0" y2="900.5" stroke="#4e4e4e" stroke-width="1" />
<line x1="11.0" y1="923.5" x2="47.0" y2="923.5" stroke="#4e4e4e" stroke-width="1" />
<line x1="11.0" y1="946.5" x2="47.0" y2="946.5" stroke="#4e4e4e" stroke-width="1" />
<line x1="11.0" y1="969.5" x2="47.0" y2="969.5" stroke="#4e4e4e" stroke-width="1" />
<line x1="11.0" y1="992.5" x2="47.0" y2="992.5" stroke="#4e4e4e" stroke-width="1" />
<line x1="11.0" y1="1018.5" x2="47.0" y2="1018.5" stroke="#4e4e4e" stroke-width="1" />
<line x1="11.0" y1="1041.5" x2="47.0" y2="1041.5" stroke="#4e4e4e" stroke-width="1" />
<line x1="11.0" y1="1065.5" x2="47.0" y2="1065.5" stroke="#4e4e4e" stroke-width="1" />
<line x1="11.0" y1="1100.5" x2="47.0" y2="1100.5" stroke="#4e4e4e" stroke-width="1" />
<line x1="11.0" y1="1123.5" x2="47.0" y2="1123.5" stroke="#4e4e4e" stroke-width="1" />
<line x1="11.0" y1="1146.5" x2="47.0" y2="1146.5" stroke="#4e4e4e" stroke-width="1" />
<line x1="11.0" y1="1169.5" x2="47.0" y2="1169.5" stroke="#4e4e4e" stroke-width="1" />
<line x1="11.0" y1="1192.5" x2="47.0" y2="1192.5" stroke="#4e4e4e" stroke-width="1" />
<line x1="11.0" y1="1215.5" x2="47.0" y2="1215.5" stroke="#4e4e4e" stroke-width="1" />
<line x1="11.0" y1="1238.5" x2="47.0" y2="1238.5" stroke="#4e4e4e" stroke-width="1" />
<line x1="11.0" y1="1261.5" x2="47.0" y2="1261.5" stroke="#4e4e4e" stroke-width="1" />
<line x1="11.0" y1="1284.5" x2="47.0" y2="1284.5" stroke="#4e4e4e" stroke-width="1" />
<line x1="11.0" y1="1307.5" x2="47.0" y2="1307.5" stroke="#4e4e4e" stroke-width="1" />
<line x1="11.0" y1="1330.5" x2="47.0" y2="1330.5" stroke="#4e4e4e" stroke-width="1" />
<line x1="11.0" y1="1353.5" x2="47.0" y2="1353.5" stroke="#4e4e4e" stroke-width="1" />
<line x1="11.0" y1="1376.5" x2="47.0" y2="1376.5" stroke="#4e4e4e" stroke-width="1" />
<line x1="11.0" y1="1399.5" x2="47.0" y2="1399.5" stroke="#4e4e4e" stroke-width="1" />
<line x1="11.0" y1="1422.5" x2="47.0" y2="1422.5" stroke="#4e4e4e" stroke-width="1" />
<line x1="11.0" y1="1445.5" x2="47.0" y2="1445.5" stroke="#4e4e4e" stroke-width="1" />
<line x1="11.0" y1="1468.5" x2="47.0" y2="1468.5" stroke="#4e4e4e" stroke-width="1" />
<line x1="11.0" y1="1491.5" x2="47.0" y2="1491.5" stroke="#4e4e4e" stroke-width="1" />
<line x1="11.0" y1="1514.5" x2="47.0" y2="1514.5" stroke="#4e4e4e" stroke-width="1" />
<line x1="11.0" y1="1537.5" x2="47.0" y2="1537.5" stroke="#4e4e4e" stroke-width="1" />
<line x1="11.0" y1="1561.5" x2="47.0" y2="1561.5" stroke="#4e4e4e" stroke-width="1" />
<line x1="11.0" y1="1596.5" x2="47.0" y2="1596.5" stroke="#4e4e4e" stroke-width="1" />
<line x1="11.0" y1="1601.5" x2="47.0" y2="1601.5" stroke="#4e4e4e" stroke-width="1" />
<line x1="11.0" y1="1625.5" x2="47.0" y2="1625.5" stroke="#4e4e4e" stroke-width="1" />
<line x1="11.0" y1="1629.5" x2="47.0" y2="1629.5" stroke="#4e4e4e" stroke-width="1" />
<line x1="11.0" y1="1652.5" x2="47.0" y2="1652.5" stroke="#4e4e4e" stroke-width="1" />
<text x="29.5" y="333.7" font-size="16.5" fill="#e8e8e8" text-anchor="middle">1</text>
<text x="29.5" y="365.7" font-size="16.5" fill="#e8e8e8" text-anchor="middle">2</text>
<text x="29.5" y="398.7" font-size="16.5" fill="#e8e8e8" text-anchor="middle">3</text>
<text x="29.5" y="422.7" font-size="16.5" fill="#e8e8e8" text-anchor="middle">4</text>
<text x="29.5" y="458.2" font-size="16.5" fill="#e8e8e8" text-anchor="middle">5</text>
<text x="29.5" y="485.7" font-size="16.5" fill="#e8e8e8" text-anchor="middle">7</text>
<text x="29.5" y="508.7" font-size="16.5" fill="#e8e8e8" text-anchor="middle">8</text>
<text x="29.5" y="531.7" font-size="16.5" fill="#e8e8e8" text-anchor="middle">9</text>
<text x="29.5" y="555.2" font-size="16.5" fill="#e8e8e8" text-anchor="middle">10</text>
<text x="29.5" y="577.7" font-size="16.5" fill="#e8e8e8" text-anchor="middle">11</text>
<text x="29.5" y="604.2" font-size="16.5" fill="#e8e8e8" text-anchor="middle">12</text>
<text x="29.5" y="627.2" font-size="16.5" fill="#e8e8e8" text-anchor="middle">13</text>
<text x="29.5" y="649.7" font-size="16.5" fill="#e8e8e8" text-anchor="middle">14</text>
<text x="29.5" y="672.7" font-size="16.5" fill="#e8e8e8" text-anchor="middle">15</text>
<text x="29.5" y="699.0" font-size="16.5" fill="#e8e8e8" text-anchor="middle">16</text>
<text x="29.5" y="722.0" font-size="16.5" fill="#e8e8e8" text-anchor="middle">17</text>
<text x="29.5" y="745.1" font-size="16.5" fill="#e8e8e8" text-anchor="middle">18</text>
<text x="29.5" y="768.1" font-size="16.5" fill="#e8e8e8" text-anchor="middle">19</text>
<text x="29.5" y="795.2" font-size="16.5" fill="#e8e8e8" text-anchor="middle">21</text>
<text x="29.5" y="818.7" font-size="16.5" fill="#e8e8e8" text-anchor="middle">22</text>
<text x="29.5" y="850.4" font-size="16.5" fill="#e8e8e8" text-anchor="middle">24</text>
<text x="29.5" y="873.4" font-size="16.5" fill="#e8e8e8" text-anchor="middle">25</text>
<text x="29.5" y="896.4" font-size="16.5" fill="#e8e8e8" text-anchor="middle">26</text>
<text x="29.5" y="918.8" font-size="16.5" fill="#e8e8e8" text-anchor="middle">27</text>
<text x="29.5" y="941.9" font-size="16.5" fill="#e8e8e8" text-anchor="middle">28</text>
<text x="29.5" y="964.9" font-size="16.5" fill="#e8e8e8" text-anchor="middle">29</text>
<text x="29.5" y="988.0" font-size="16.5" fill="#e8e8e8" text-anchor="middle">30</text>
<text x="29.5" y="1014.1" font-size="16.5" fill="#e8e8e8" text-anchor="middle">31</text>
<text x="29.5" y="1037.1" font-size="16.5" fill="#e8e8e8" text-anchor="middle">32</text>
<text x="29.5" y="1061.2" font-size="16.5" fill="#e8e8e8" text-anchor="middle">33</text>
<text x="29.5" y="1096.3" font-size="16.5" fill="#e8e8e8" text-anchor="middle">34</text>
<text x="29.5" y="1119.3" font-size="16.5" fill="#e8e8e8" text-anchor="middle">35</text>
<text x="29.5" y="1142.4" font-size="16.5" fill="#e8e8e8" text-anchor="middle">36</text>
<text x="29.5" y="1165.2" font-size="16.5" fill="#e8e8e8" text-anchor="middle">37</text>
<text x="29.5" y="1187.7" font-size="16.5" fill="#e8e8e8" text-anchor="middle">38</text>
<text x="29.5" y="1210.7" font-size="16.5" fill="#e8e8e8" text-anchor="middle">39</text>
<text x="29.5" y="1233.7" font-size="16.5" fill="#e8e8e8" text-anchor="middle">40</text>
<text x="29.5" y="1256.7" font-size="16.5" fill="#e8e8e8" text-anchor="middle">41</text>
<text x="29.5" y="1279.7" font-size="16.5" fill="#e8e8e8" text-anchor="middle">42</text>
<text x="29.5" y="1302.7" font-size="16.5" fill="#e8e8e8" text-anchor="middle">43</text>
<text x="29.5" y="1325.7" font-size="16.5" fill="#e8e8e8" text-anchor="middle">44</text>
<text x="29.5" y="1349.2" font-size="16.5" fill="#e8e8e8" text-anchor="middle">45</text>
<text x="29.5" y="1372.2" font-size="16.5" fill="#e8e8e8" text-anchor="middle">46</text>
<text x="29.5" y="1394.7" font-size="16.5" fill="#e8e8e8" text-anchor="middle">47</text>
<text x="29.5" y="1417.7" font-size="16.5" fill="#e8e8e8" text-anchor="middle">48</text>
<text x="29.5" y="1440.7" font-size="16.5" fill="#e8e8e8" text-anchor="middle">49</text>
<text x="29.5" y="1463.7" font-size="16.5" fill="#e8e8e8" text-anchor="middle">50</text>
<text x="29.5" y="1486.9" font-size="16.5" fill="#e8e8e8" text-anchor="middle">51</text>
<text x="29.5" y="1510.0" font-size="16.5" fill="#e8e8e8" text-anchor="middle">52</text>
<text x="29.5" y="1533.2" font-size="16.5" fill="#e8e8e8" text-anchor="middle">53</text>
<text x="29.5" y="1557.3" font-size="16.5" fill="#e8e8e8" text-anchor="middle">54</text>
<text x="29.5" y="1592.4" font-size="16.5" fill="#e8e8e8" text-anchor="middle">55</text>
<text x="29.5" y="1620.7" font-size="16.5" fill="#e8e8e8" text-anchor="middle">57</text>
<text x="29.5" y="1647.7" font-size="16.5" fill="#e8e8e8" text-anchor="middle">59</text>
<text x="29.5" y="1670.7" font-size="16.5" fill="#e8e8e8" text-anchor="middle">60</text>
<path d="M2860 290 Q2860 280 2870 280 L2880 280 Q2890 280 2890 290 L2890 1670 L2860 1670 Z" fill="#131313"/>
<path d="M2869 296 L2876 286 L2883 296 Z" fill="#9a9a9a" stroke="#9a9a9a" stroke-width="1.5" stroke-linejoin="round"/>
<rect x="2870" y="304" width="12" height="530" rx="6" fill="#9a9a9a"/>
<path d="M2869 1654 L2883 1654 L2876 1664 Z" fill="#9a9a9a" stroke="#9a9a9a" stroke-width="1.5" stroke-linejoin="round"/>
<line x1="47.0" y1="427.3" x2="2860.0" y2="427.3" stroke="#c6c6c6" stroke-width="1" />
<text x="76.5" y="331.0" font-size="31" fill="#262626" font-weight="bold" textLength="496.8" lengthAdjust="spacingAndGlyphs">Financial Statements Summary</text>
<text x="76.0" y="365.2" font-size="27" fill="#000" font-weight="bold" textLength="260.0" lengthAdjust="spacingAndGlyphs">ABC Company Inc.</text>
<text x="74.4" y="392.6" font-size="17" fill="#2F78E8" font-weight="bold" textLength="210.5" lengthAdjust="spacingAndGlyphs">Go to Table of Contents</text>
<rect x="74.4" y="393.9" width="209.6" height="1.7" fill="#2F78E8" />
<text x="1701.0" y="395.4" font-size="22" fill="#1a1a1a" font-weight="bold" text-anchor="end" textLength="216.7" lengthAdjust="spacingAndGlyphs">Select reporting year</text>
<rect x="1723.3" y="370.2" width="274.2" height="33.6" fill="#F7EE6E" stroke="#dcdcdc" stroke-width="1"/>
<text x="1861.3" y="395.4" font-size="22" fill="#111" font-weight="bold" text-anchor="middle" textLength="49.9" lengthAdjust="spacingAndGlyphs">2026</text>
<rect x="70.3" y="427.0" width="1074.0" height="35.5" fill="#4B4FD3" />
<rect x="1175.2" y="427.0" width="1644.1" height="35.5" fill="#4B4FD3" />
<text x="607.7" y="454.9" font-size="27.5" fill="#fff" font-weight="bold" text-anchor="middle" textLength="777.5" lengthAdjust="spacingAndGlyphs">Income Statement ($'000) - 5 years to December 2030</text>
<text x="1997.2" y="454.9" font-size="27.5" fill="#fff" font-weight="bold" text-anchor="middle" textLength="479.0" lengthAdjust="spacingAndGlyphs">Income Statement ($'000) - 2026</text>
<rect x="71.1" y="468.0" width="472.8" height="22.0" fill="#6D73E7" />
<rect x="545.1" y="468.0" width="118.8" height="22.0" fill="#6D73E7" />
<rect x="665.1" y="468.0" width="118.7" height="22.0" fill="#6D73E7" />
<rect x="785.0" y="468.0" width="118.8" height="22.0" fill="#6D73E7" />
<rect x="905.0" y="468.0" width="118.7" height="22.0" fill="#6D73E7" />
<rect x="1024.9" y="468.0" width="118.8" height="22.0" fill="#6D73E7" />
<rect x="1175.8" y="468.0" width="135.8" height="22.0" fill="#6D73E7" />
<rect x="1312.8" y="468.0" width="135.8" height="22.0" fill="#6D73E7" />
<rect x="1449.8" y="468.0" width="135.8" height="22.0" fill="#6D73E7" />
<rect x="1586.8" y="468.0" width="135.8" height="22.0" fill="#6D73E7" />
<rect x="1723.8" y="468.0" width="135.8" height="22.0" fill="#6D73E7" />
<rect x="1860.8" y="468.0" width="135.8" height="22.0" fill="#6D73E7" />
<rect x="1997.8" y="468.0" width="135.8" height="22.0" fill="#6D73E7" />
<rect x="2134.8" y="468.0" width="135.8" height="22.0" fill="#6D73E7" />
<rect x="2271.8" y="468.0" width="135.8" height="22.0" fill="#6D73E7" />
<rect x="2408.8" y="468.0" width="135.8" height="22.0" fill="#6D73E7" />
<rect x="2545.8" y="468.0" width="135.8" height="22.0" fill="#6D73E7" />
<rect x="2682.8" y="468.0" width="135.9" height="22.0" fill="#6D73E7" />
<text x="82.4" y="485.8" font-size="19" fill="#fff" font-weight="bold" textLength="108.2" lengthAdjust="spacingAndGlyphs">Year Ending</text>
<text x="604.5" y="485.8" font-size="17" fill="#fff" font-weight="bold" text-anchor="middle" textLength="43.1" lengthAdjust="spacingAndGlyphs">2026</text>
<text x="724.4" y="485.8" font-size="17" fill="#fff" font-weight="bold" text-anchor="middle" textLength="43.1" lengthAdjust="spacingAndGlyphs">2027</text>
<text x="844.4" y="485.8" font-size="17" fill="#fff" font-weight="bold" text-anchor="middle" textLength="43.1" lengthAdjust="spacingAndGlyphs">2028</text>
<text x="964.3" y="485.8" font-size="17" fill="#fff" font-weight="bold" text-anchor="middle" textLength="43.1" lengthAdjust="spacingAndGlyphs">2029</text>
<text x="1084.3" y="485.8" font-size="17" fill="#fff" font-weight="bold" text-anchor="middle" textLength="43.1" lengthAdjust="spacingAndGlyphs">2030</text>
<text x="1243.7" y="485.8" font-size="17" fill="#fff" font-weight="bold" text-anchor="middle" textLength="32.2" lengthAdjust="spacingAndGlyphs">Jan</text>
<text x="1380.7" y="485.8" font-size="17" fill="#fff" font-weight="bold" text-anchor="middle" textLength="33.2" lengthAdjust="spacingAndGlyphs">Feb</text>
<text x="1517.7" y="485.8" font-size="17" fill="#fff" font-weight="bold" text-anchor="middle" textLength="33.3" lengthAdjust="spacingAndGlyphs">Mar</text>
<text x="1654.7" y="485.8" font-size="17" fill="#fff" font-weight="bold" text-anchor="middle" textLength="32.2" lengthAdjust="spacingAndGlyphs">Apr</text>
<text x="1791.7" y="485.8" font-size="17" fill="#fff" font-weight="bold" text-anchor="middle" textLength="36.4" lengthAdjust="spacingAndGlyphs">May</text>
<text x="1928.7" y="485.8" font-size="17" fill="#fff" font-weight="bold" text-anchor="middle" textLength="33.2" lengthAdjust="spacingAndGlyphs">Jun</text>
<text x="2065.7" y="485.8" font-size="17" fill="#fff" font-weight="bold" text-anchor="middle" textLength="27.0" lengthAdjust="spacingAndGlyphs">Jul</text>
<text x="2202.7" y="485.8" font-size="17" fill="#fff" font-weight="bold" text-anchor="middle" textLength="36.3" lengthAdjust="spacingAndGlyphs">Aug</text>
<text x="2339.7" y="485.8" font-size="17" fill="#fff" font-weight="bold" text-anchor="middle" textLength="34.3" lengthAdjust="spacingAndGlyphs">Sep</text>
<text x="2476.7" y="485.8" font-size="17" fill="#fff" font-weight="bold" text-anchor="middle" textLength="31.2" lengthAdjust="spacingAndGlyphs">Oct</text>
<text x="2613.7" y="485.8" font-size="17" fill="#fff" font-weight="bold" text-anchor="middle" textLength="35.3" lengthAdjust="spacingAndGlyphs">Nov</text>
<text x="2750.8" y="485.8" font-size="17" fill="#fff" font-weight="bold" text-anchor="middle" textLength="34.3" lengthAdjust="spacingAndGlyphs">Dec</text>
<text x="74.6" y="508.5" font-size="16.5" fill="#111111" textLength="66.5" lengthAdjust="spacingAndGlyphs">Revenue</text>
<text x="653.9" y="508.5" font-size="16.5" fill="#111111" text-anchor="end" textLength="29.5" lengthAdjust="spacingAndGlyphs">589</text>
<text x="773.8" y="508.5" font-size="16.5" fill="#111111" text-anchor="end" textLength="44.2" lengthAdjust="spacingAndGlyphs">1,245</text>
<text x="893.8" y="508.5" font-size="16.5" fill="#111111" text-anchor="end" textLength="44.2" lengthAdjust="spacingAndGlyphs">2,047</text>
<text x="1013.7" y="508.5" font-size="16.5" fill="#111111" text-anchor="end" textLength="44.2" lengthAdjust="spacingAndGlyphs">3,127</text>
<text x="1133.7" y="508.5" font-size="16.5" fill="#111111" text-anchor="end" textLength="44.2" lengthAdjust="spacingAndGlyphs">4,309</text>
<text x="1301.6" y="508.5" font-size="16.5" fill="#111111" text-anchor="end" textLength="19.6" lengthAdjust="spacingAndGlyphs">49</text>
<text x="1438.6" y="508.5" font-size="16.5" fill="#111111" text-anchor="end" textLength="19.6" lengthAdjust="spacingAndGlyphs">49</text>
<text x="1575.6" y="508.5" font-size="16.5" fill="#111111" text-anchor="end" textLength="19.6" lengthAdjust="spacingAndGlyphs">49</text>
<text x="1712.6" y="508.5" font-size="16.5" fill="#111111" text-anchor="end" textLength="19.6" lengthAdjust="spacingAndGlyphs">49</text>
<text x="1849.6" y="508.5" font-size="16.5" fill="#111111" text-anchor="end" textLength="19.6" lengthAdjust="spacingAndGlyphs">49</text>
<text x="1986.6" y="508.5" font-size="16.5" fill="#111111" text-anchor="end" textLength="19.6" lengthAdjust="spacingAndGlyphs">49</text>
<text x="2123.6" y="508.5" font-size="16.5" fill="#111111" text-anchor="end" textLength="19.6" lengthAdjust="spacingAndGlyphs">49</text>
<text x="2260.6" y="508.5" font-size="16.5" fill="#111111" text-anchor="end" textLength="19.6" lengthAdjust="spacingAndGlyphs">49</text>
<text x="2397.6" y="508.5" font-size="16.5" fill="#111111" text-anchor="end" textLength="19.6" lengthAdjust="spacingAndGlyphs">49</text>
<text x="2534.6" y="508.5" font-size="16.5" fill="#111111" text-anchor="end" textLength="19.6" lengthAdjust="spacingAndGlyphs">49</text>
<text x="2671.6" y="508.5" font-size="16.5" fill="#111111" text-anchor="end" textLength="19.6" lengthAdjust="spacingAndGlyphs">49</text>
<text x="2808.7" y="508.5" font-size="16.5" fill="#111111" text-anchor="end" textLength="19.6" lengthAdjust="spacingAndGlyphs">49</text>
<text x="92.7" y="531.5" font-size="16.5" fill="#111111" font-style="italic" textLength="81.0" lengthAdjust="spacingAndGlyphs">Growth %</text>
<text x="772.4" y="531.5" font-size="16.5" fill="#111111" font-style="italic" text-anchor="end" textLength="46.9" lengthAdjust="spacingAndGlyphs">111%</text>
<text x="892.4" y="531.5" font-size="16.5" fill="#111111" font-style="italic" text-anchor="end" textLength="39.0" lengthAdjust="spacingAndGlyphs">64%</text>
<text x="1012.3" y="531.5" font-size="16.5" fill="#111111" font-style="italic" text-anchor="end" textLength="39.0" lengthAdjust="spacingAndGlyphs">53%</text>
<text x="1132.3" y="531.5" font-size="16.5" fill="#111111" font-style="italic" text-anchor="end" textLength="39.0" lengthAdjust="spacingAndGlyphs">38%</text>
<text x="1300.7" y="531.5" font-size="16.5" fill="#111111" text-anchor="end" textLength="6.6" lengthAdjust="spacingAndGlyphs">-</text>
<text x="1437.7" y="531.5" font-size="16.5" fill="#111111" text-anchor="end" textLength="6.6" lengthAdjust="spacingAndGlyphs">-</text>
<text x="1574.7" y="531.5" font-size="16.5" fill="#111111" text-anchor="end" textLength="6.6" lengthAdjust="spacingAndGlyphs">-</text>
<text x="1711.7" y="531.5" font-size="16.5" fill="#111111" text-anchor="end" textLength="6.6" lengthAdjust="spacingAndGlyphs">-</text>
<text x="1848.7" y="531.5" font-size="16.5" fill="#111111" text-anchor="end" textLength="6.6" lengthAdjust="spacingAndGlyphs">-</text>
<text x="1985.7" y="531.5" font-size="16.5" fill="#111111" text-anchor="end" textLength="6.6" lengthAdjust="spacingAndGlyphs">-</text>
<text x="2122.7" y="531.5" font-size="16.5" fill="#111111" text-anchor="end" textLength="6.6" lengthAdjust="spacingAndGlyphs">-</text>
<text x="2259.7" y="531.5" font-size="16.5" fill="#111111" text-anchor="end" textLength="6.6" lengthAdjust="spacingAndGlyphs">-</text>
<text x="2396.7" y="531.5" font-size="16.5" fill="#111111" text-anchor="end" textLength="6.6" lengthAdjust="spacingAndGlyphs">-</text>
<text x="2533.7" y="531.5" font-size="16.5" fill="#111111" text-anchor="end" textLength="6.6" lengthAdjust="spacingAndGlyphs">-</text>
<text x="2670.7" y="531.5" font-size="16.5" fill="#111111" text-anchor="end" textLength="6.6" lengthAdjust="spacingAndGlyphs">-</text>
<text x="2807.8" y="531.5" font-size="16.5" fill="#111111" text-anchor="end" textLength="6.6" lengthAdjust="spacingAndGlyphs">-</text>
<text x="74.6" y="555.0" font-size="16.5" fill="#111111" textLength="45.8" lengthAdjust="spacingAndGlyphs">COGS</text>
<text x="660.9" y="555.0" font-size="16.5" fill="#111111" text-anchor="end" textLength="34.1" lengthAdjust="spacingAndGlyphs">(21)</text>
<text x="780.8" y="555.0" font-size="16.5" fill="#111111" text-anchor="end" textLength="34.1" lengthAdjust="spacingAndGlyphs">(41)</text>
<text x="900.8" y="555.0" font-size="16.5" fill="#111111" text-anchor="end" textLength="34.1" lengthAdjust="spacingAndGlyphs">(63)</text>
<text x="1020.7" y="555.0" font-size="16.5" fill="#111111" text-anchor="end" textLength="34.1" lengthAdjust="spacingAndGlyphs">(91)</text>
<text x="1140.7" y="555.0" font-size="16.5" fill="#111111" text-anchor="end" textLength="42.6" lengthAdjust="spacingAndGlyphs">(116)</text>
<text x="1308.6" y="555.0" font-size="16.5" fill="#111111" text-anchor="end" textLength="24.3" lengthAdjust="spacingAndGlyphs">(2)</text>
<text x="1445.6" y="555.0" font-size="16.5" fill="#111111" text-anchor="end" textLength="24.3" lengthAdjust="spacingAndGlyphs">(2)</text>
<text x="1582.6" y="555.0" font-size="16.5" fill="#111111" text-anchor="end" textLength="24.3" lengthAdjust="spacingAndGlyphs">(2)</text>
<text x="1719.6" y="555.0" font-size="16.5" fill="#111111" text-anchor="end" textLength="24.3" lengthAdjust="spacingAndGlyphs">(2)</text>
<text x="1856.6" y="555.0" font-size="16.5" fill="#111111" text-anchor="end" textLength="24.3" lengthAdjust="spacingAndGlyphs">(2)</text>
<text x="1993.6" y="555.0" font-size="16.5" fill="#111111" text-anchor="end" textLength="24.3" lengthAdjust="spacingAndGlyphs">(2)</text>
<text x="2130.6" y="555.0" font-size="16.5" fill="#111111" text-anchor="end" textLength="24.3" lengthAdjust="spacingAndGlyphs">(2)</text>
<text x="2267.6" y="555.0" font-size="16.5" fill="#111111" text-anchor="end" textLength="24.3" lengthAdjust="spacingAndGlyphs">(2)</text>
<text x="2404.6" y="555.0" font-size="16.5" fill="#111111" text-anchor="end" textLength="24.3" lengthAdjust="spacingAndGlyphs">(2)</text>
<text x="2541.6" y="555.0" font-size="16.5" fill="#111111" text-anchor="end" textLength="24.3" lengthAdjust="spacingAndGlyphs">(2)</text>
<text x="2678.6" y="555.0" font-size="16.5" fill="#111111" text-anchor="end" textLength="24.3" lengthAdjust="spacingAndGlyphs">(2)</text>
<text x="2815.7" y="555.0" font-size="16.5" fill="#111111" text-anchor="end" textLength="24.3" lengthAdjust="spacingAndGlyphs">(2)</text>
<text x="92.7" y="577.5" font-size="16.5" fill="#111111" font-style="italic" textLength="113.4" lengthAdjust="spacingAndGlyphs">% of Revenue</text>
<text x="659.9" y="577.5" font-size="16.5" fill="#111111" font-style="italic" text-anchor="end" textLength="44.1" lengthAdjust="spacingAndGlyphs">(4%)</text>
<text x="779.8" y="577.5" font-size="16.5" fill="#111111" font-style="italic" text-anchor="end" textLength="44.1" lengthAdjust="spacingAndGlyphs">(3%)</text>
<text x="899.8" y="577.5" font-size="16.5" fill="#111111" font-style="italic" text-anchor="end" textLength="44.1" lengthAdjust="spacingAndGlyphs">(3%)</text>
<text x="1019.7" y="577.5" font-size="16.5" fill="#111111" font-style="italic" text-anchor="end" textLength="44.1" lengthAdjust="spacingAndGlyphs">(3%)</text>
<text x="1139.7" y="577.5" font-size="16.5" fill="#111111" font-style="italic" text-anchor="end" textLength="44.1" lengthAdjust="spacingAndGlyphs">(3%)</text>
<text x="1307.6" y="577.5" font-size="16.5" fill="#111111" font-style="italic" text-anchor="end" textLength="44.1" lengthAdjust="spacingAndGlyphs">(4%)</text>
<text x="1444.6" y="577.5" font-size="16.5" fill="#111111" font-style="italic" text-anchor="end" textLength="44.1" lengthAdjust="spacingAndGlyphs">(4%)</text>
<text x="1581.6" y="577.5" font-size="16.5" fill="#111111" font-style="italic" text-anchor="end" textLength="44.1" lengthAdjust="spacingAndGlyphs">(4%)</text>
<text x="1718.6" y="577.5" font-size="16.5" fill="#111111" font-style="italic" text-anchor="end" textLength="44.1" lengthAdjust="spacingAndGlyphs">(4%)</text>
<text x="1855.6" y="577.5" font-size="16.5" fill="#111111" font-style="italic" text-anchor="end" textLength="44.1" lengthAdjust="spacingAndGlyphs">(4%)</text>
<text x="1992.6" y="577.5" font-size="16.5" fill="#111111" font-style="italic" text-anchor="end" textLength="44.1" lengthAdjust="spacingAndGlyphs">(4%)</text>
<text x="2129.6" y="577.5" font-size="16.5" fill="#111111" font-style="italic" text-anchor="end" textLength="44.1" lengthAdjust="spacingAndGlyphs">(4%)</text>
<text x="2266.6" y="577.5" font-size="16.5" fill="#111111" font-style="italic" text-anchor="end" textLength="44.1" lengthAdjust="spacingAndGlyphs">(4%)</text>
<text x="2403.6" y="577.5" font-size="16.5" fill="#111111" font-style="italic" text-anchor="end" textLength="44.1" lengthAdjust="spacingAndGlyphs">(4%)</text>
<text x="2540.6" y="577.5" font-size="16.5" fill="#111111" font-style="italic" text-anchor="end" textLength="44.1" lengthAdjust="spacingAndGlyphs">(4%)</text>
<text x="2677.6" y="577.5" font-size="16.5" fill="#111111" font-style="italic" text-anchor="end" textLength="44.1" lengthAdjust="spacingAndGlyphs">(4%)</text>
<text x="2814.7" y="577.5" font-size="16.5" fill="#111111" font-style="italic" text-anchor="end" textLength="44.1" lengthAdjust="spacingAndGlyphs">(4%)</text>
<rect x="70.3" y="582.0" width="1074.0" height="26.5" fill="#4AB0E6" />
<rect x="1175.2" y="582.0" width="1644.1" height="26.5" fill="#4AB0E6" />
<text x="85.6" y="603.5" font-size="21.5" fill="#fff" font-weight="bold" textLength="138.5" lengthAdjust="spacingAndGlyphs">Gross Margin</text>
<text x="653.0" y="601.3" font-size="17" fill="#fff" font-weight="bold" text-anchor="end" textLength="32.3" lengthAdjust="spacingAndGlyphs">569</text>
<text x="772.9" y="601.3" font-size="17" fill="#fff" font-weight="bold" text-anchor="end" textLength="48.5" lengthAdjust="spacingAndGlyphs">1,204</text>
<text x="892.9" y="601.3" font-size="17" fill="#fff" font-weight="bold" text-anchor="end" textLength="48.5" lengthAdjust="spacingAndGlyphs">1,983</text>
<text x="1012.8" y="601.3" font-size="17" fill="#fff" font-weight="bold" text-anchor="end" textLength="48.5" lengthAdjust="spacingAndGlyphs">3,036</text>
<text x="1132.8" y="601.3" font-size="17" fill="#fff" font-weight="bold" text-anchor="end" textLength="48.5" lengthAdjust="spacingAndGlyphs">4,193</text>
<text x="1300.7" y="601.3" font-size="17" fill="#fff" font-weight="bold" text-anchor="end" textLength="21.6" lengthAdjust="spacingAndGlyphs">47</text>
<text x="1437.7" y="601.3" font-size="17" fill="#fff" font-weight="bold" text-anchor="end" textLength="21.6" lengthAdjust="spacingAndGlyphs">47</text>
<text x="1574.7" y="601.3" font-size="17" fill="#fff" font-weight="bold" text-anchor="end" textLength="21.6" lengthAdjust="spacingAndGlyphs">47</text>
<text x="1711.7" y="601.3" font-size="17" fill="#fff" font-weight="bold" text-anchor="end" textLength="21.6" lengthAdjust="spacingAndGlyphs">47</text>
<text x="1848.7" y="601.3" font-size="17" fill="#fff" font-weight="bold" text-anchor="end" textLength="21.6" lengthAdjust="spacingAndGlyphs">47</text>
<text x="1985.7" y="601.3" font-size="17" fill="#fff" font-weight="bold" text-anchor="end" textLength="21.6" lengthAdjust="spacingAndGlyphs">47</text>
<text x="2122.7" y="601.3" font-size="17" fill="#fff" font-weight="bold" text-anchor="end" textLength="21.6" lengthAdjust="spacingAndGlyphs">47</text>
<text x="2259.7" y="601.3" font-size="17" fill="#fff" font-weight="bold" text-anchor="end" textLength="21.6" lengthAdjust="spacingAndGlyphs">47</text>
<text x="2396.7" y="601.3" font-size="17" fill="#fff" font-weight="bold" text-anchor="end" textLength="21.6" lengthAdjust="spacingAndGlyphs">47</text>
<text x="2533.7" y="601.3" font-size="17" fill="#fff" font-weight="bold" text-anchor="end" textLength="21.6" lengthAdjust="spacingAndGlyphs">47</text>
<text x="2670.7" y="601.3" font-size="17" fill="#fff" font-weight="bold" text-anchor="end" textLength="21.6" lengthAdjust="spacingAndGlyphs">47</text>
<text x="2807.8" y="601.3" font-size="17" fill="#fff" font-weight="bold" text-anchor="end" textLength="21.6" lengthAdjust="spacingAndGlyphs">47</text>
<text x="92.7" y="627.0" font-size="16.5" fill="#111111" font-style="italic" textLength="126.5" lengthAdjust="spacingAndGlyphs">Gross Margin %</text>
<text x="652.5" y="627.0" font-size="16.5" fill="#111111" font-style="italic" text-anchor="end" textLength="39.0" lengthAdjust="spacingAndGlyphs">97%</text>
<text x="772.4" y="627.0" font-size="16.5" fill="#111111" font-style="italic" text-anchor="end" textLength="39.0" lengthAdjust="spacingAndGlyphs">97%</text>
<text x="892.4" y="627.0" font-size="16.5" fill="#111111" font-style="italic" text-anchor="end" textLength="39.0" lengthAdjust="spacingAndGlyphs">97%</text>
<text x="1012.3" y="627.0" font-size="16.5" fill="#111111" font-style="italic" text-anchor="end" textLength="39.0" lengthAdjust="spacingAndGlyphs">97%</text>
<text x="1132.3" y="627.0" font-size="16.5" fill="#111111" font-style="italic" text-anchor="end" textLength="39.0" lengthAdjust="spacingAndGlyphs">97%</text>
<text x="1300.2" y="627.0" font-size="16.5" fill="#111111" font-style="italic" text-anchor="end" textLength="39.0" lengthAdjust="spacingAndGlyphs">97%</text>
<text x="1437.2" y="627.0" font-size="16.5" fill="#111111" font-style="italic" text-anchor="end" textLength="39.0" lengthAdjust="spacingAndGlyphs">97%</text>
<text x="1574.2" y="627.0" font-size="16.5" fill="#111111" font-style="italic" text-anchor="end" textLength="39.0" lengthAdjust="spacingAndGlyphs">97%</text>
<text x="1711.2" y="627.0" font-size="16.5" fill="#111111" font-style="italic" text-anchor="end" textLength="39.0" lengthAdjust="spacingAndGlyphs">97%</text>
<text x="1848.2" y="627.0" font-size="16.5" fill="#111111" font-style="italic" text-anchor="end" textLength="39.0" lengthAdjust="spacingAndGlyphs">97%</text>
<text x="1985.2" y="627.0" font-size="16.5" fill="#111111" font-style="italic" text-anchor="end" textLength="39.0" lengthAdjust="spacingAndGlyphs">97%</text>
<text x="2122.2" y="627.0" font-size="16.5" fill="#111111" font-style="italic" text-anchor="end" textLength="39.0" lengthAdjust="spacingAndGlyphs">97%</text>
<text x="2259.2" y="627.0" font-size="16.5" fill="#111111" font-style="italic" text-anchor="end" textLength="39.0" lengthAdjust="spacingAndGlyphs">97%</text>
<text x="2396.2" y="627.0" font-size="16.5" fill="#111111" font-style="italic" text-anchor="end" textLength="39.0" lengthAdjust="spacingAndGlyphs">97%</text>
<text x="2533.2" y="627.0" font-size="16.5" fill="#111111" font-style="italic" text-anchor="end" textLength="39.0" lengthAdjust="spacingAndGlyphs">97%</text>
<text x="2670.2" y="627.0" font-size="16.5" fill="#111111" font-style="italic" text-anchor="end" textLength="39.0" lengthAdjust="spacingAndGlyphs">97%</text>
<text x="2807.3" y="627.0" font-size="16.5" fill="#111111" font-style="italic" text-anchor="end" textLength="39.0" lengthAdjust="spacingAndGlyphs">97%</text>
<text x="74.6" y="649.5" font-size="16.5" fill="#111111" textLength="141.0" lengthAdjust="spacingAndGlyphs">Variable Expenses</text>
<text x="660.9" y="649.5" font-size="16.5" fill="#111111" text-anchor="end" textLength="34.1" lengthAdjust="spacingAndGlyphs">(59)</text>
<text x="780.8" y="649.5" font-size="16.5" fill="#111111" text-anchor="end" textLength="43.9" lengthAdjust="spacingAndGlyphs">(120)</text>
<text x="900.8" y="649.5" font-size="16.5" fill="#111111" text-anchor="end" textLength="43.9" lengthAdjust="spacingAndGlyphs">(188)</text>
<text x="1020.7" y="649.5" font-size="16.5" fill="#111111" text-anchor="end" textLength="43.9" lengthAdjust="spacingAndGlyphs">(275)</text>
<text x="1140.7" y="649.5" font-size="16.5" fill="#111111" text-anchor="end" textLength="43.9" lengthAdjust="spacingAndGlyphs">(362)</text>
<text x="1308.6" y="649.5" font-size="16.5" fill="#111111" text-anchor="end" textLength="24.3" lengthAdjust="spacingAndGlyphs">(5)</text>
<text x="1445.6" y="649.5" font-size="16.5" fill="#111111" text-anchor="end" textLength="24.3" lengthAdjust="spacingAndGlyphs">(5)</text>
<text x="1582.6" y="649.5" font-size="16.5" fill="#111111" text-anchor="end" textLength="24.3" lengthAdjust="spacingAndGlyphs">(5)</text>
<text x="1719.6" y="649.5" font-size="16.5" fill="#111111" text-anchor="end" textLength="24.3" lengthAdjust="spacingAndGlyphs">(5)</text>
<text x="1856.6" y="649.5" font-size="16.5" fill="#111111" text-anchor="end" textLength="24.3" lengthAdjust="spacingAndGlyphs">(5)</text>
<text x="1993.6" y="649.5" font-size="16.5" fill="#111111" text-anchor="end" textLength="24.3" lengthAdjust="spacingAndGlyphs">(5)</text>
<text x="2130.6" y="649.5" font-size="16.5" fill="#111111" text-anchor="end" textLength="24.3" lengthAdjust="spacingAndGlyphs">(5)</text>
<text x="2267.6" y="649.5" font-size="16.5" fill="#111111" text-anchor="end" textLength="24.3" lengthAdjust="spacingAndGlyphs">(5)</text>
<text x="2404.6" y="649.5" font-size="16.5" fill="#111111" text-anchor="end" textLength="24.3" lengthAdjust="spacingAndGlyphs">(5)</text>
<text x="2541.6" y="649.5" font-size="16.5" fill="#111111" text-anchor="end" textLength="24.3" lengthAdjust="spacingAndGlyphs">(5)</text>
<text x="2678.6" y="649.5" font-size="16.5" fill="#111111" text-anchor="end" textLength="24.3" lengthAdjust="spacingAndGlyphs">(5)</text>
<text x="2815.7" y="649.5" font-size="16.5" fill="#111111" text-anchor="end" textLength="24.3" lengthAdjust="spacingAndGlyphs">(5)</text>
<text x="92.7" y="672.5" font-size="16.5" fill="#111111" font-style="italic" textLength="113.4" lengthAdjust="spacingAndGlyphs">% of Revenue</text>
<text x="659.9" y="672.5" font-size="16.5" fill="#111111" font-style="italic" text-anchor="end" textLength="54.9" lengthAdjust="spacingAndGlyphs">(10%)</text>
<text x="779.8" y="672.5" font-size="16.5" fill="#111111" font-style="italic" text-anchor="end" textLength="54.9" lengthAdjust="spacingAndGlyphs">(10%)</text>
<text x="899.8" y="672.5" font-size="16.5" fill="#111111" font-style="italic" text-anchor="end" textLength="44.1" lengthAdjust="spacingAndGlyphs">(9%)</text>
<text x="1019.7" y="672.5" font-size="16.5" fill="#111111" font-style="italic" text-anchor="end" textLength="44.1" lengthAdjust="spacingAndGlyphs">(9%)</text>
<text x="1139.7" y="672.5" font-size="16.5" fill="#111111" font-style="italic" text-anchor="end" textLength="44.1" lengthAdjust="spacingAndGlyphs">(8%)</text>
<text x="1307.6" y="672.5" font-size="16.5" fill="#111111" font-style="italic" text-anchor="end" textLength="54.9" lengthAdjust="spacingAndGlyphs">(10%)</text>
<text x="1444.6" y="672.5" font-size="16.5" fill="#111111" font-style="italic" text-anchor="end" textLength="54.9" lengthAdjust="spacingAndGlyphs">(10%)</text>
<text x="1581.6" y="672.5" font-size="16.5" fill="#111111" font-style="italic" text-anchor="end" textLength="54.9" lengthAdjust="spacingAndGlyphs">(10%)</text>
<text x="1718.6" y="672.5" font-size="16.5" fill="#111111" font-style="italic" text-anchor="end" textLength="54.9" lengthAdjust="spacingAndGlyphs">(10%)</text>
<text x="1855.6" y="672.5" font-size="16.5" fill="#111111" font-style="italic" text-anchor="end" textLength="54.9" lengthAdjust="spacingAndGlyphs">(10%)</text>
<text x="1992.6" y="672.5" font-size="16.5" fill="#111111" font-style="italic" text-anchor="end" textLength="54.9" lengthAdjust="spacingAndGlyphs">(10%)</text>
<text x="2129.6" y="672.5" font-size="16.5" fill="#111111" font-style="italic" text-anchor="end" textLength="54.9" lengthAdjust="spacingAndGlyphs">(10%)</text>
<text x="2266.6" y="672.5" font-size="16.5" fill="#111111" font-style="italic" text-anchor="end" textLength="54.9" lengthAdjust="spacingAndGlyphs">(10%)</text>
<text x="2403.6" y="672.5" font-size="16.5" fill="#111111" font-style="italic" text-anchor="end" textLength="54.9" lengthAdjust="spacingAndGlyphs">(10%)</text>
<text x="2540.6" y="672.5" font-size="16.5" fill="#111111" font-style="italic" text-anchor="end" textLength="54.9" lengthAdjust="spacingAndGlyphs">(10%)</text>
<text x="2677.6" y="672.5" font-size="16.5" fill="#111111" font-style="italic" text-anchor="end" textLength="54.9" lengthAdjust="spacingAndGlyphs">(10%)</text>
<text x="2814.7" y="672.5" font-size="16.5" fill="#111111" font-style="italic" text-anchor="end" textLength="54.9" lengthAdjust="spacingAndGlyphs">(10%)</text>
<rect x="70.3" y="677.0" width="1074.0" height="26.3" fill="#4AB0E6" />
<rect x="1175.2" y="677.0" width="1644.1" height="26.3" fill="#4AB0E6" />
<text x="85.6" y="698.3" font-size="21.5" fill="#fff" font-weight="bold" textLength="209.5" lengthAdjust="spacingAndGlyphs">Contribution Margin</text>
<text x="653.0" y="696.1" font-size="17" fill="#fff" font-weight="bold" text-anchor="end" textLength="32.3" lengthAdjust="spacingAndGlyphs">510</text>
<text x="772.9" y="696.1" font-size="17" fill="#fff" font-weight="bold" text-anchor="end" textLength="48.5" lengthAdjust="spacingAndGlyphs">1,084</text>
<text x="892.9" y="696.1" font-size="17" fill="#fff" font-weight="bold" text-anchor="end" textLength="48.5" lengthAdjust="spacingAndGlyphs">1,795</text>
<text x="1012.8" y="696.1" font-size="17" fill="#fff" font-weight="bold" text-anchor="end" textLength="48.5" lengthAdjust="spacingAndGlyphs">2,761</text>
<text x="1132.8" y="696.1" font-size="17" fill="#fff" font-weight="bold" text-anchor="end" textLength="48.5" lengthAdjust="spacingAndGlyphs">3,831</text>
<text x="1300.7" y="696.1" font-size="17" fill="#fff" font-weight="bold" text-anchor="end" textLength="21.6" lengthAdjust="spacingAndGlyphs">42</text>
<text x="1437.7" y="696.1" font-size="17" fill="#fff" font-weight="bold" text-anchor="end" textLength="21.6" lengthAdjust="spacingAndGlyphs">42</text>
<text x="1574.7" y="696.1" font-size="17" fill="#fff" font-weight="bold" text-anchor="end" textLength="21.6" lengthAdjust="spacingAndGlyphs">42</text>
<text x="1711.7" y="696.1" font-size="17" fill="#fff" font-weight="bold" text-anchor="end" textLength="21.6" lengthAdjust="spacingAndGlyphs">42</text>
<text x="1848.7" y="696.1" font-size="17" fill="#fff" font-weight="bold" text-anchor="end" textLength="21.6" lengthAdjust="spacingAndGlyphs">42</text>
<text x="1985.7" y="696.1" font-size="17" fill="#fff" font-weight="bold" text-anchor="end" textLength="21.6" lengthAdjust="spacingAndGlyphs">42</text>
<text x="2122.7" y="696.1" font-size="17" fill="#fff" font-weight="bold" text-anchor="end" textLength="21.6" lengthAdjust="spacingAndGlyphs">42</text>
<text x="2259.7" y="696.1" font-size="17" fill="#fff" font-weight="bold" text-anchor="end" textLength="21.6" lengthAdjust="spacingAndGlyphs">42</text>
<text x="2396.7" y="696.1" font-size="17" fill="#fff" font-weight="bold" text-anchor="end" textLength="21.6" lengthAdjust="spacingAndGlyphs">42</text>
<text x="2533.7" y="696.1" font-size="17" fill="#fff" font-weight="bold" text-anchor="end" textLength="21.6" lengthAdjust="spacingAndGlyphs">42</text>
<text x="2670.7" y="696.1" font-size="17" fill="#fff" font-weight="bold" text-anchor="end" textLength="21.6" lengthAdjust="spacingAndGlyphs">42</text>
<text x="2807.8" y="696.1" font-size="17" fill="#fff" font-weight="bold" text-anchor="end" textLength="21.6" lengthAdjust="spacingAndGlyphs">42</text>
<text x="92.7" y="721.8" font-size="16.5" fill="#111111" font-style="italic" textLength="179.5" lengthAdjust="spacingAndGlyphs">Contribution Margin %</text>
<text x="652.5" y="721.8" font-size="16.5" fill="#111111" font-style="italic" text-anchor="end" textLength="39.0" lengthAdjust="spacingAndGlyphs">87%</text>
<text x="772.4" y="721.8" font-size="16.5" fill="#111111" font-style="italic" text-anchor="end" textLength="39.0" lengthAdjust="spacingAndGlyphs">87%</text>
<text x="892.4" y="721.8" font-size="16.5" fill="#111111" font-style="italic" text-anchor="end" textLength="39.0" lengthAdjust="spacingAndGlyphs">88%</text>
<text x="1012.3" y="721.8" font-size="16.5" fill="#111111" font-style="italic" text-anchor="end" textLength="39.0" lengthAdjust="spacingAndGlyphs">88%</text>
<text x="1132.3" y="721.8" font-size="16.5" fill="#111111" font-style="italic" text-anchor="end" textLength="39.0" lengthAdjust="spacingAndGlyphs">89%</text>
<text x="1300.2" y="721.8" font-size="16.5" fill="#111111" font-style="italic" text-anchor="end" textLength="39.0" lengthAdjust="spacingAndGlyphs">87%</text>
<text x="1437.2" y="721.8" font-size="16.5" fill="#111111" font-style="italic" text-anchor="end" textLength="39.0" lengthAdjust="spacingAndGlyphs">87%</text>
<text x="1574.2" y="721.8" font-size="16.5" fill="#111111" font-style="italic" text-anchor="end" textLength="39.0" lengthAdjust="spacingAndGlyphs">87%</text>
<text x="1711.2" y="721.8" font-size="16.5" fill="#111111" font-style="italic" text-anchor="end" textLength="39.0" lengthAdjust="spacingAndGlyphs">87%</text>
<text x="1848.2" y="721.8" font-size="16.5" fill="#111111" font-style="italic" text-anchor="end" textLength="39.0" lengthAdjust="spacingAndGlyphs">87%</text>
<text x="1985.2" y="721.8" font-size="16.5" fill="#111111" font-style="italic" text-anchor="end" textLength="39.0" lengthAdjust="spacingAndGlyphs">87%</text>
<text x="2122.2" y="721.8" font-size="16.5" fill="#111111" font-style="italic" text-anchor="end" textLength="39.0" lengthAdjust="spacingAndGlyphs">87%</text>
<text x="2259.2" y="721.8" font-size="16.5" fill="#111111" font-style="italic" text-anchor="end" textLength="39.0" lengthAdjust="spacingAndGlyphs">87%</text>
<text x="2396.2" y="721.8" font-size="16.5" fill="#111111" font-style="italic" text-anchor="end" textLength="39.0" lengthAdjust="spacingAndGlyphs">87%</text>
<text x="2533.2" y="721.8" font-size="16.5" fill="#111111" font-style="italic" text-anchor="end" textLength="39.0" lengthAdjust="spacingAndGlyphs">87%</text>
<text x="2670.2" y="721.8" font-size="16.5" fill="#111111" font-style="italic" text-anchor="end" textLength="39.0" lengthAdjust="spacingAndGlyphs">87%</text>
<text x="2807.3" y="721.8" font-size="16.5" fill="#111111" font-style="italic" text-anchor="end" textLength="39.0" lengthAdjust="spacingAndGlyphs">87%</text>
<text x="74.6" y="744.9" font-size="16.5" fill="#111111" textLength="131.0" lengthAdjust="spacingAndGlyphs">Payroll Expenses</text>
<text x="660.9" y="744.9" font-size="16.5" fill="#111111" text-anchor="end" textLength="43.9" lengthAdjust="spacingAndGlyphs">(465)</text>
<text x="780.8" y="744.9" font-size="16.5" fill="#111111" text-anchor="end" textLength="42.6" lengthAdjust="spacingAndGlyphs">(811)</text>
<text x="900.8" y="744.9" font-size="16.5" fill="#111111" text-anchor="end" textLength="58.6" lengthAdjust="spacingAndGlyphs">(1,133)</text>
<text x="1020.7" y="744.9" font-size="16.5" fill="#111111" text-anchor="end" textLength="58.6" lengthAdjust="spacingAndGlyphs">(1,499)</text>
<text x="1140.7" y="744.9" font-size="16.5" fill="#111111" text-anchor="end" textLength="58.6" lengthAdjust="spacingAndGlyphs">(1,846)</text>
<text x="1308.6" y="744.9" font-size="16.5" fill="#111111" text-anchor="end" textLength="34.1" lengthAdjust="spacingAndGlyphs">(39)</text>
<text x="1445.6" y="744.9" font-size="16.5" fill="#111111" text-anchor="end" textLength="34.1" lengthAdjust="spacingAndGlyphs">(39)</text>
<text x="1582.6" y="744.9" font-size="16.5" fill="#111111" text-anchor="end" textLength="34.1" lengthAdjust="spacingAndGlyphs">(39)</text>
<text x="1719.6" y="744.9" font-size="16.5" fill="#111111" text-anchor="end" textLength="34.1" lengthAdjust="spacingAndGlyphs">(39)</text>
<text x="1856.6" y="744.9" font-size="16.5" fill="#111111" text-anchor="end" textLength="34.1" lengthAdjust="spacingAndGlyphs">(39)</text>
<text x="1993.6" y="744.9" font-size="16.5" fill="#111111" text-anchor="end" textLength="34.1" lengthAdjust="spacingAndGlyphs">(39)</text>
<text x="2130.6" y="744.9" font-size="16.5" fill="#111111" text-anchor="end" textLength="34.1" lengthAdjust="spacingAndGlyphs">(39)</text>
<text x="2267.6" y="744.9" font-size="16.5" fill="#111111" text-anchor="end" textLength="34.1" lengthAdjust="spacingAndGlyphs">(39)</text>
<text x="2404.6" y="744.9" font-size="16.5" fill="#111111" text-anchor="end" textLength="34.1" lengthAdjust="spacingAndGlyphs">(39)</text>
<text x="2541.6" y="744.9" font-size="16.5" fill="#111111" text-anchor="end" textLength="34.1" lengthAdjust="spacingAndGlyphs">(39)</text>
<text x="2678.6" y="744.9" font-size="16.5" fill="#111111" text-anchor="end" textLength="34.1" lengthAdjust="spacingAndGlyphs">(39)</text>
<text x="2815.7" y="744.9" font-size="16.5" fill="#111111" text-anchor="end" textLength="34.1" lengthAdjust="spacingAndGlyphs">(39)</text>
<text x="92.7" y="767.9" font-size="16.5" fill="#111111" font-style="italic" textLength="113.4" lengthAdjust="spacingAndGlyphs">% of Revenue</text>
<text x="659.9" y="767.9" font-size="16.5" fill="#111111" font-style="italic" text-anchor="end" textLength="54.9" lengthAdjust="spacingAndGlyphs">(79%)</text>
<text x="779.8" y="767.9" font-size="16.5" fill="#111111" font-style="italic" text-anchor="end" textLength="54.9" lengthAdjust="spacingAndGlyphs">(65%)</text>
<text x="899.8" y="767.9" font-size="16.5" fill="#111111" font-style="italic" text-anchor="end" textLength="54.9" lengthAdjust="spacingAndGlyphs">(55%)</text>
<text x="1019.7" y="767.9" font-size="16.5" fill="#111111" font-style="italic" text-anchor="end" textLength="54.9" lengthAdjust="spacingAndGlyphs">(48%)</text>
<text x="1139.7" y="767.9" font-size="16.5" fill="#111111" font-style="italic" text-anchor="end" textLength="54.9" lengthAdjust="spacingAndGlyphs">(43%)</text>
<text x="1307.6" y="767.9" font-size="16.5" fill="#111111" font-style="italic" text-anchor="end" textLength="54.9" lengthAdjust="spacingAndGlyphs">(79%)</text>
<text x="1444.6" y="767.9" font-size="16.5" fill="#111111" font-style="italic" text-anchor="end" textLength="54.9" lengthAdjust="spacingAndGlyphs">(79%)</text>
<text x="1581.6" y="767.9" font-size="16.5" fill="#111111" font-style="italic" text-anchor="end" textLength="54.9" lengthAdjust="spacingAndGlyphs">(79%)</text>
<text x="1718.6" y="767.9" font-size="16.5" fill="#111111" font-style="italic" text-anchor="end" textLength="54.9" lengthAdjust="spacingAndGlyphs">(79%)</text>
<text x="1855.6" y="767.9" font-size="16.5" fill="#111111" font-style="italic" text-anchor="end" textLength="54.9" lengthAdjust="spacingAndGlyphs">(79%)</text>
<text x="1992.6" y="767.9" font-size="16.5" fill="#111111" font-style="italic" text-anchor="end" textLength="54.9" lengthAdjust="spacingAndGlyphs">(79%)</text>
<text x="2129.6" y="767.9" font-size="16.5" fill="#111111" font-style="italic" text-anchor="end" textLength="54.9" lengthAdjust="spacingAndGlyphs">(79%)</text>
<text x="2266.6" y="767.9" font-size="16.5" fill="#111111" font-style="italic" text-anchor="end" textLength="54.9" lengthAdjust="spacingAndGlyphs">(79%)</text>
<text x="2403.6" y="767.9" font-size="16.5" fill="#111111" font-style="italic" text-anchor="end" textLength="54.9" lengthAdjust="spacingAndGlyphs">(79%)</text>
<text x="2540.6" y="767.9" font-size="16.5" fill="#111111" font-style="italic" text-anchor="end" textLength="54.9" lengthAdjust="spacingAndGlyphs">(79%)</text>
<text x="2677.6" y="767.9" font-size="16.5" fill="#111111" font-style="italic" text-anchor="end" textLength="54.9" lengthAdjust="spacingAndGlyphs">(79%)</text>
<text x="2814.7" y="767.9" font-size="16.5" fill="#111111" font-style="italic" text-anchor="end" textLength="54.9" lengthAdjust="spacingAndGlyphs">(79%)</text>
<text x="74.6" y="795.0" font-size="16.5" fill="#111111" textLength="119.8" lengthAdjust="spacingAndGlyphs">Fixed Expenses</text>
<text x="660.9" y="795.0" font-size="16.5" fill="#111111" text-anchor="end" textLength="43.9" lengthAdjust="spacingAndGlyphs">(239)</text>
<text x="780.8" y="795.0" font-size="16.5" fill="#111111" text-anchor="end" textLength="43.9" lengthAdjust="spacingAndGlyphs">(239)</text>
<text x="900.8" y="795.0" font-size="16.5" fill="#111111" text-anchor="end" textLength="43.9" lengthAdjust="spacingAndGlyphs">(239)</text>
<text x="1020.7" y="795.0" font-size="16.5" fill="#111111" text-anchor="end" textLength="43.9" lengthAdjust="spacingAndGlyphs">(239)</text>
<text x="1140.7" y="795.0" font-size="16.5" fill="#111111" text-anchor="end" textLength="43.9" lengthAdjust="spacingAndGlyphs">(239)</text>
<text x="1308.6" y="795.0" font-size="16.5" fill="#111111" text-anchor="end" textLength="34.1" lengthAdjust="spacingAndGlyphs">(20)</text>
<text x="1445.6" y="795.0" font-size="16.5" fill="#111111" text-anchor="end" textLength="34.1" lengthAdjust="spacingAndGlyphs">(20)</text>
<text x="1582.6" y="795.0" font-size="16.5" fill="#111111" text-anchor="end" textLength="34.1" lengthAdjust="spacingAndGlyphs">(20)</text>
<text x="1719.6" y="795.0" font-size="16.5" fill="#111111" text-anchor="end" textLength="34.1" lengthAdjust="spacingAndGlyphs">(20)</text>
<text x="1856.6" y="795.0" font-size="16.5" fill="#111111" text-anchor="end" textLength="34.1" lengthAdjust="spacingAndGlyphs">(20)</text>
<text x="1993.6" y="795.0" font-size="16.5" fill="#111111" text-anchor="end" textLength="34.1" lengthAdjust="spacingAndGlyphs">(20)</text>
<text x="2130.6" y="795.0" font-size="16.5" fill="#111111" text-anchor="end" textLength="34.1" lengthAdjust="spacingAndGlyphs">(20)</text>
<text x="2267.6" y="795.0" font-size="16.5" fill="#111111" text-anchor="end" textLength="34.1" lengthAdjust="spacingAndGlyphs">(20)</text>
<text x="2404.6" y="795.0" font-size="16.5" fill="#111111" text-anchor="end" textLength="34.1" lengthAdjust="spacingAndGlyphs">(20)</text>
<text x="2541.6" y="795.0" font-size="16.5" fill="#111111" text-anchor="end" textLength="34.1" lengthAdjust="spacingAndGlyphs">(20)</text>
<text x="2678.6" y="795.0" font-size="16.5" fill="#111111" text-anchor="end" textLength="34.1" lengthAdjust="spacingAndGlyphs">(20)</text>
<text x="2815.7" y="795.0" font-size="16.5" fill="#111111" text-anchor="end" textLength="34.1" lengthAdjust="spacingAndGlyphs">(20)</text>
<text x="92.7" y="818.5" font-size="16.5" fill="#111111" font-style="italic" textLength="113.4" lengthAdjust="spacingAndGlyphs">% of Revenue</text>
<text x="659.9" y="818.5" font-size="16.5" fill="#111111" font-style="italic" text-anchor="end" textLength="54.9" lengthAdjust="spacingAndGlyphs">(41%)</text>
<text x="779.8" y="818.5" font-size="16.5" fill="#111111" font-style="italic" text-anchor="end" textLength="54.9" lengthAdjust="spacingAndGlyphs">(19%)</text>
<text x="899.8" y="818.5" font-size="16.5" fill="#111111" font-style="italic" text-anchor="end" textLength="54.9" lengthAdjust="spacingAndGlyphs">(12%)</text>
<text x="1019.7" y="818.5" font-size="16.5" fill="#111111" font-style="italic" text-anchor="end" textLength="44.1" lengthAdjust="spacingAndGlyphs">(8%)</text>
<text x="1139.7" y="818.5" font-size="16.5" fill="#111111" font-style="italic" text-anchor="end" textLength="44.1" lengthAdjust="spacingAndGlyphs">(6%)</text>
<text x="1307.6" y="818.5" font-size="16.5" fill="#111111" font-style="italic" text-anchor="end" textLength="54.9" lengthAdjust="spacingAndGlyphs">(41%)</text>
<text x="1444.6" y="818.5" font-size="16.5" fill="#111111" font-style="italic" text-anchor="end" textLength="54.9" lengthAdjust="spacingAndGlyphs">(41%)</text>
<text x="1581.6" y="818.5" font-size="16.5" fill="#111111" font-style="italic" text-anchor="end" textLength="54.9" lengthAdjust="spacingAndGlyphs">(41%)</text>
<text x="1718.6" y="818.5" font-size="16.5" fill="#111111" font-style="italic" text-anchor="end" textLength="54.9" lengthAdjust="spacingAndGlyphs">(41%)</text>
<text x="1855.6" y="818.5" font-size="16.5" fill="#111111" font-style="italic" text-anchor="end" textLength="54.9" lengthAdjust="spacingAndGlyphs">(41%)</text>
<text x="1992.6" y="818.5" font-size="16.5" fill="#111111" font-style="italic" text-anchor="end" textLength="54.9" lengthAdjust="spacingAndGlyphs">(41%)</text>
<text x="2129.6" y="818.5" font-size="16.5" fill="#111111" font-style="italic" text-anchor="end" textLength="54.9" lengthAdjust="spacingAndGlyphs">(41%)</text>
<text x="2266.6" y="818.5" font-size="16.5" fill="#111111" font-style="italic" text-anchor="end" textLength="54.9" lengthAdjust="spacingAndGlyphs">(41%)</text>
<text x="2403.6" y="818.5" font-size="16.5" fill="#111111" font-style="italic" text-anchor="end" textLength="54.9" lengthAdjust="spacingAndGlyphs">(41%)</text>
<text x="2540.6" y="818.5" font-size="16.5" fill="#111111" font-style="italic" text-anchor="end" textLength="54.9" lengthAdjust="spacingAndGlyphs">(41%)</text>
<text x="2677.6" y="818.5" font-size="16.5" fill="#111111" font-style="italic" text-anchor="end" textLength="54.9" lengthAdjust="spacingAndGlyphs">(41%)</text>
<text x="2814.7" y="818.5" font-size="16.5" fill="#111111" font-style="italic" text-anchor="end" textLength="54.9" lengthAdjust="spacingAndGlyphs">(41%)</text>
<rect x="70.3" y="827.6" width="1074.0" height="27.1" fill="#4AB0E6" />
<rect x="1175.2" y="827.6" width="1644.1" height="27.1" fill="#4AB0E6" />
<text x="85.6" y="849.7" font-size="21.5" fill="#fff" font-weight="bold" textLength="80.0" lengthAdjust="spacingAndGlyphs">EBITDA</text>
<text x="660.2" y="847.5" font-size="17" fill="#fff" font-weight="bold" text-anchor="end" textLength="47.6" lengthAdjust="spacingAndGlyphs">(195)</text>
<text x="772.9" y="847.5" font-size="17" fill="#fff" font-weight="bold" text-anchor="end" textLength="21.6" lengthAdjust="spacingAndGlyphs">34</text>
<text x="892.9" y="847.5" font-size="17" fill="#fff" font-weight="bold" text-anchor="end" textLength="32.3" lengthAdjust="spacingAndGlyphs">422</text>
<text x="1012.8" y="847.5" font-size="17" fill="#fff" font-weight="bold" text-anchor="end" textLength="48.5" lengthAdjust="spacingAndGlyphs">1,023</text>
<text x="1132.8" y="847.5" font-size="17" fill="#fff" font-weight="bold" text-anchor="end" textLength="48.5" lengthAdjust="spacingAndGlyphs">1,746</text>
<text x="1308.0" y="847.5" font-size="17" fill="#fff" font-weight="bold" text-anchor="end" textLength="36.9" lengthAdjust="spacingAndGlyphs">(16)</text>
<text x="1445.0" y="847.5" font-size="17" fill="#fff" font-weight="bold" text-anchor="end" textLength="36.9" lengthAdjust="spacingAndGlyphs">(16)</text>
<text x="1582.0" y="847.5" font-size="17" fill="#fff" font-weight="bold" text-anchor="end" textLength="36.9" lengthAdjust="spacingAndGlyphs">(16)</text>
<text x="1719.0" y="847.5" font-size="17" fill="#fff" font-weight="bold" text-anchor="end" textLength="36.9" lengthAdjust="spacingAndGlyphs">(16)</text>
<text x="1856.0" y="847.5" font-size="17" fill="#fff" font-weight="bold" text-anchor="end" textLength="36.9" lengthAdjust="spacingAndGlyphs">(16)</text>
<text x="1993.0" y="847.5" font-size="17" fill="#fff" font-weight="bold" text-anchor="end" textLength="36.9" lengthAdjust="spacingAndGlyphs">(16)</text>
<text x="2130.0" y="847.5" font-size="17" fill="#fff" font-weight="bold" text-anchor="end" textLength="36.9" lengthAdjust="spacingAndGlyphs">(16)</text>
<text x="2267.0" y="847.5" font-size="17" fill="#fff" font-weight="bold" text-anchor="end" textLength="36.9" lengthAdjust="spacingAndGlyphs">(16)</text>
<text x="2404.0" y="847.5" font-size="17" fill="#fff" font-weight="bold" text-anchor="end" textLength="36.9" lengthAdjust="spacingAndGlyphs">(16)</text>
<text x="2541.0" y="847.5" font-size="17" fill="#fff" font-weight="bold" text-anchor="end" textLength="36.9" lengthAdjust="spacingAndGlyphs">(16)</text>
<text x="2678.0" y="847.5" font-size="17" fill="#fff" font-weight="bold" text-anchor="end" textLength="36.9" lengthAdjust="spacingAndGlyphs">(16)</text>
<text x="2815.1" y="847.5" font-size="17" fill="#fff" font-weight="bold" text-anchor="end" textLength="36.9" lengthAdjust="spacingAndGlyphs">(16)</text>
<text x="74.6" y="873.2" font-size="16.5" fill="#111111" font-style="italic" textLength="86.6" lengthAdjust="spacingAndGlyphs">EBITDA %</text>
<text x="659.9" y="873.2" font-size="16.5" fill="#111111" font-style="italic" text-anchor="end" textLength="54.9" lengthAdjust="spacingAndGlyphs">(33%)</text>
<text x="772.4" y="873.2" font-size="16.5" fill="#111111" font-style="italic" text-anchor="end" textLength="28.1" lengthAdjust="spacingAndGlyphs">3%</text>
<text x="892.4" y="873.2" font-size="16.5" fill="#111111" font-style="italic" text-anchor="end" textLength="39.0" lengthAdjust="spacingAndGlyphs">21%</text>
<text x="1012.3" y="873.2" font-size="16.5" fill="#111111" font-style="italic" text-anchor="end" textLength="39.0" lengthAdjust="spacingAndGlyphs">33%</text>
<text x="1132.3" y="873.2" font-size="16.5" fill="#111111" font-style="italic" text-anchor="end" textLength="39.0" lengthAdjust="spacingAndGlyphs">41%</text>
<text x="1307.6" y="873.2" font-size="16.5" fill="#111111" font-style="italic" text-anchor="end" textLength="54.9" lengthAdjust="spacingAndGlyphs">(33%)</text>
<text x="1444.6" y="873.2" font-size="16.5" fill="#111111" font-style="italic" text-anchor="end" textLength="54.9" lengthAdjust="spacingAndGlyphs">(33%)</text>
<text x="1581.6" y="873.2" font-size="16.5" fill="#111111" font-style="italic" text-anchor="end" textLength="54.9" lengthAdjust="spacingAndGlyphs">(33%)</text>
<text x="1718.6" y="873.2" font-size="16.5" fill="#111111" font-style="italic" text-anchor="end" textLength="54.9" lengthAdjust="spacingAndGlyphs">(33%)</text>
<text x="1855.6" y="873.2" font-size="16.5" fill="#111111" font-style="italic" text-anchor="end" textLength="54.9" lengthAdjust="spacingAndGlyphs">(33%)</text>
<text x="1992.6" y="873.2" font-size="16.5" fill="#111111" font-style="italic" text-anchor="end" textLength="54.9" lengthAdjust="spacingAndGlyphs">(33%)</text>
<text x="2129.6" y="873.2" font-size="16.5" fill="#111111" font-style="italic" text-anchor="end" textLength="54.9" lengthAdjust="spacingAndGlyphs">(33%)</text>
<text x="2266.6" y="873.2" font-size="16.5" fill="#111111" font-style="italic" text-anchor="end" textLength="54.9" lengthAdjust="spacingAndGlyphs">(33%)</text>
<text x="2403.6" y="873.2" font-size="16.5" fill="#111111" font-style="italic" text-anchor="end" textLength="54.9" lengthAdjust="spacingAndGlyphs">(33%)</text>
<text x="2540.6" y="873.2" font-size="16.5" fill="#111111" font-style="italic" text-anchor="end" textLength="54.9" lengthAdjust="spacingAndGlyphs">(33%)</text>
<text x="2677.6" y="873.2" font-size="16.5" fill="#111111" font-style="italic" text-anchor="end" textLength="54.9" lengthAdjust="spacingAndGlyphs">(33%)</text>
<text x="2814.7" y="873.2" font-size="16.5" fill="#111111" font-style="italic" text-anchor="end" textLength="54.9" lengthAdjust="spacingAndGlyphs">(33%)</text>
<text x="74.6" y="896.2" font-size="16.5" fill="#111111" textLength="219.3" lengthAdjust="spacingAndGlyphs">Depreciation &amp; Amortization</text>
<text x="660.9" y="896.2" font-size="16.5" fill="#111111" text-anchor="end" textLength="34.1" lengthAdjust="spacingAndGlyphs">(72)</text>
<text x="780.8" y="896.2" font-size="16.5" fill="#111111" text-anchor="end" textLength="34.1" lengthAdjust="spacingAndGlyphs">(86)</text>
<text x="900.8" y="896.2" font-size="16.5" fill="#111111" text-anchor="end" textLength="34.1" lengthAdjust="spacingAndGlyphs">(86)</text>
<text x="1020.7" y="896.2" font-size="16.5" fill="#111111" text-anchor="end" textLength="34.1" lengthAdjust="spacingAndGlyphs">(86)</text>
<text x="1140.7" y="896.2" font-size="16.5" fill="#111111" text-anchor="end" textLength="34.1" lengthAdjust="spacingAndGlyphs">(86)</text>
<text x="1308.6" y="896.2" font-size="16.5" fill="#111111" text-anchor="end" textLength="24.3" lengthAdjust="spacingAndGlyphs">(2)</text>
<text x="1445.6" y="896.2" font-size="16.5" fill="#111111" text-anchor="end" textLength="24.3" lengthAdjust="spacingAndGlyphs">(4)</text>
<text x="1582.6" y="896.2" font-size="16.5" fill="#111111" text-anchor="end" textLength="24.3" lengthAdjust="spacingAndGlyphs">(6)</text>
<text x="1719.6" y="896.2" font-size="16.5" fill="#111111" text-anchor="end" textLength="24.3" lengthAdjust="spacingAndGlyphs">(6)</text>
<text x="1856.6" y="896.2" font-size="16.5" fill="#111111" text-anchor="end" textLength="24.3" lengthAdjust="spacingAndGlyphs">(6)</text>
<text x="1993.6" y="896.2" font-size="16.5" fill="#111111" text-anchor="end" textLength="24.3" lengthAdjust="spacingAndGlyphs">(6)</text>
<text x="2130.6" y="896.2" font-size="16.5" fill="#111111" text-anchor="end" textLength="24.3" lengthAdjust="spacingAndGlyphs">(7)</text>
<text x="2267.6" y="896.2" font-size="16.5" fill="#111111" text-anchor="end" textLength="24.3" lengthAdjust="spacingAndGlyphs">(7)</text>
<text x="2404.6" y="896.2" font-size="16.5" fill="#111111" text-anchor="end" textLength="24.3" lengthAdjust="spacingAndGlyphs">(7)</text>
<text x="2541.6" y="896.2" font-size="16.5" fill="#111111" text-anchor="end" textLength="24.3" lengthAdjust="spacingAndGlyphs">(7)</text>
<text x="2678.6" y="896.2" font-size="16.5" fill="#111111" text-anchor="end" textLength="24.3" lengthAdjust="spacingAndGlyphs">(7)</text>
<text x="2815.7" y="896.2" font-size="16.5" fill="#111111" text-anchor="end" textLength="24.3" lengthAdjust="spacingAndGlyphs">(7)</text>
<text x="74.6" y="918.6" font-size="16.5" fill="#111111" textLength="38.3" lengthAdjust="spacingAndGlyphs">EBIT</text>
<text x="660.9" y="918.6" font-size="16.5" fill="#111111" text-anchor="end" textLength="43.9" lengthAdjust="spacingAndGlyphs">(267)</text>
<text x="780.8" y="918.6" font-size="16.5" fill="#111111" text-anchor="end" textLength="34.1" lengthAdjust="spacingAndGlyphs">(51)</text>
<text x="893.8" y="918.6" font-size="16.5" fill="#111111" text-anchor="end" textLength="29.5" lengthAdjust="spacingAndGlyphs">336</text>
<text x="1013.7" y="918.6" font-size="16.5" fill="#111111" text-anchor="end" textLength="29.5" lengthAdjust="spacingAndGlyphs">937</text>
<text x="1133.7" y="918.6" font-size="16.5" fill="#111111" text-anchor="end" textLength="44.2" lengthAdjust="spacingAndGlyphs">1,660</text>
<text x="1308.6" y="918.6" font-size="16.5" fill="#111111" text-anchor="end" textLength="34.1" lengthAdjust="spacingAndGlyphs">(18)</text>
<text x="1445.6" y="918.6" font-size="16.5" fill="#111111" text-anchor="end" textLength="34.1" lengthAdjust="spacingAndGlyphs">(20)</text>
<text x="1582.6" y="918.6" font-size="16.5" fill="#111111" text-anchor="end" textLength="34.1" lengthAdjust="spacingAndGlyphs">(22)</text>
<text x="1719.6" y="918.6" font-size="16.5" fill="#111111" text-anchor="end" textLength="34.1" lengthAdjust="spacingAndGlyphs">(22)</text>
<text x="1856.6" y="918.6" font-size="16.5" fill="#111111" text-anchor="end" textLength="34.1" lengthAdjust="spacingAndGlyphs">(23)</text>
<text x="1993.6" y="918.6" font-size="16.5" fill="#111111" text-anchor="end" textLength="34.1" lengthAdjust="spacingAndGlyphs">(23)</text>
<text x="2130.6" y="918.6" font-size="16.5" fill="#111111" text-anchor="end" textLength="34.1" lengthAdjust="spacingAndGlyphs">(23)</text>
<text x="2267.6" y="918.6" font-size="16.5" fill="#111111" text-anchor="end" textLength="34.1" lengthAdjust="spacingAndGlyphs">(23)</text>
<text x="2404.6" y="918.6" font-size="16.5" fill="#111111" text-anchor="end" textLength="34.1" lengthAdjust="spacingAndGlyphs">(23)</text>
<text x="2541.6" y="918.6" font-size="16.5" fill="#111111" text-anchor="end" textLength="34.1" lengthAdjust="spacingAndGlyphs">(23)</text>
<text x="2678.6" y="918.6" font-size="16.5" fill="#111111" text-anchor="end" textLength="34.1" lengthAdjust="spacingAndGlyphs">(23)</text>
<text x="2815.7" y="918.6" font-size="16.5" fill="#111111" text-anchor="end" textLength="34.1" lengthAdjust="spacingAndGlyphs">(23)</text>
<text x="74.6" y="941.7" font-size="16.5" fill="#111111" textLength="165.3" lengthAdjust="spacingAndGlyphs">Net Interest Expense</text>
<text x="660.9" y="941.7" font-size="16.5" fill="#111111" text-anchor="end" textLength="34.1" lengthAdjust="spacingAndGlyphs">(18)</text>
<text x="780.8" y="941.7" font-size="16.5" fill="#111111" text-anchor="end" textLength="34.1" lengthAdjust="spacingAndGlyphs">(17)</text>
<text x="900.8" y="941.7" font-size="16.5" fill="#111111" text-anchor="end" textLength="34.1" lengthAdjust="spacingAndGlyphs">(14)</text>
<text x="1020.7" y="941.7" font-size="16.5" fill="#111111" text-anchor="end" textLength="32.8" lengthAdjust="spacingAndGlyphs">(11)</text>
<text x="1140.7" y="941.7" font-size="16.5" fill="#111111" text-anchor="end" textLength="24.3" lengthAdjust="spacingAndGlyphs">(7)</text>
<text x="1308.6" y="941.7" font-size="16.5" fill="#111111" text-anchor="end" textLength="24.3" lengthAdjust="spacingAndGlyphs">(1)</text>
<text x="1445.6" y="941.7" font-size="16.5" fill="#111111" text-anchor="end" textLength="24.3" lengthAdjust="spacingAndGlyphs">(1)</text>
<text x="1582.6" y="941.7" font-size="16.5" fill="#111111" text-anchor="end" textLength="24.3" lengthAdjust="spacingAndGlyphs">(2)</text>
<text x="1719.6" y="941.7" font-size="16.5" fill="#111111" text-anchor="end" textLength="24.3" lengthAdjust="spacingAndGlyphs">(2)</text>
<text x="1856.6" y="941.7" font-size="16.5" fill="#111111" text-anchor="end" textLength="24.3" lengthAdjust="spacingAndGlyphs">(2)</text>
<text x="1993.6" y="941.7" font-size="16.5" fill="#111111" text-anchor="end" textLength="24.3" lengthAdjust="spacingAndGlyphs">(2)</text>
<text x="2130.6" y="941.7" font-size="16.5" fill="#111111" text-anchor="end" textLength="24.3" lengthAdjust="spacingAndGlyphs">(2)</text>
<text x="2267.6" y="941.7" font-size="16.5" fill="#111111" text-anchor="end" textLength="24.3" lengthAdjust="spacingAndGlyphs">(2)</text>
<text x="2404.6" y="941.7" font-size="16.5" fill="#111111" text-anchor="end" textLength="24.3" lengthAdjust="spacingAndGlyphs">(2)</text>
<text x="2541.6" y="941.7" font-size="16.5" fill="#111111" text-anchor="end" textLength="24.3" lengthAdjust="spacingAndGlyphs">(2)</text>
<text x="2678.6" y="941.7" font-size="16.5" fill="#111111" text-anchor="end" textLength="24.3" lengthAdjust="spacingAndGlyphs">(2)</text>
<text x="2815.7" y="941.7" font-size="16.5" fill="#111111" text-anchor="end" textLength="24.3" lengthAdjust="spacingAndGlyphs">(2)</text>
<text x="74.6" y="964.7" font-size="16.5" fill="#111111" textLength="166.7" lengthAdjust="spacingAndGlyphs">Net Profit Before Tax</text>
<text x="660.9" y="964.7" font-size="16.5" fill="#111111" text-anchor="end" textLength="43.9" lengthAdjust="spacingAndGlyphs">(285)</text>
<text x="780.8" y="964.7" font-size="16.5" fill="#111111" text-anchor="end" textLength="34.1" lengthAdjust="spacingAndGlyphs">(69)</text>
<text x="893.8" y="964.7" font-size="16.5" fill="#111111" text-anchor="end" textLength="29.5" lengthAdjust="spacingAndGlyphs">322</text>
<text x="1013.7" y="964.7" font-size="16.5" fill="#111111" text-anchor="end" textLength="29.5" lengthAdjust="spacingAndGlyphs">927</text>
<text x="1133.7" y="964.7" font-size="16.5" fill="#111111" text-anchor="end" textLength="44.2" lengthAdjust="spacingAndGlyphs">1,653</text>
<text x="1308.6" y="964.7" font-size="16.5" fill="#111111" text-anchor="end" textLength="34.1" lengthAdjust="spacingAndGlyphs">(19)</text>
<text x="1445.6" y="964.7" font-size="16.5" fill="#111111" text-anchor="end" textLength="34.1" lengthAdjust="spacingAndGlyphs">(21)</text>
<text x="1582.6" y="964.7" font-size="16.5" fill="#111111" text-anchor="end" textLength="34.1" lengthAdjust="spacingAndGlyphs">(23)</text>
<text x="1719.6" y="964.7" font-size="16.5" fill="#111111" text-anchor="end" textLength="34.1" lengthAdjust="spacingAndGlyphs">(24)</text>
<text x="1856.6" y="964.7" font-size="16.5" fill="#111111" text-anchor="end" textLength="34.1" lengthAdjust="spacingAndGlyphs">(24)</text>
<text x="1993.6" y="964.7" font-size="16.5" fill="#111111" text-anchor="end" textLength="34.1" lengthAdjust="spacingAndGlyphs">(25)</text>
<text x="2130.6" y="964.7" font-size="16.5" fill="#111111" text-anchor="end" textLength="34.1" lengthAdjust="spacingAndGlyphs">(25)</text>
<text x="2267.6" y="964.7" font-size="16.5" fill="#111111" text-anchor="end" textLength="34.1" lengthAdjust="spacingAndGlyphs">(25)</text>
<text x="2404.6" y="964.7" font-size="16.5" fill="#111111" text-anchor="end" textLength="34.1" lengthAdjust="spacingAndGlyphs">(25)</text>
<text x="2541.6" y="964.7" font-size="16.5" fill="#111111" text-anchor="end" textLength="34.1" lengthAdjust="spacingAndGlyphs">(25)</text>
<text x="2678.6" y="964.7" font-size="16.5" fill="#111111" text-anchor="end" textLength="34.1" lengthAdjust="spacingAndGlyphs">(25)</text>
<text x="2815.7" y="964.7" font-size="16.5" fill="#111111" text-anchor="end" textLength="34.1" lengthAdjust="spacingAndGlyphs">(25)</text>
<text x="74.6" y="987.8" font-size="16.5" fill="#111111" textLength="100.0" lengthAdjust="spacingAndGlyphs">Tax Expense</text>
<text x="653.0" y="987.8" font-size="16.5" fill="#111111" text-anchor="end" textLength="6.6" lengthAdjust="spacingAndGlyphs">-</text>
<text x="772.9" y="987.8" font-size="16.5" fill="#111111" text-anchor="end" textLength="6.6" lengthAdjust="spacingAndGlyphs">-</text>
<text x="900.8" y="987.8" font-size="16.5" fill="#111111" text-anchor="end" textLength="34.1" lengthAdjust="spacingAndGlyphs">(81)</text>
<text x="1020.7" y="987.8" font-size="16.5" fill="#111111" text-anchor="end" textLength="43.9" lengthAdjust="spacingAndGlyphs">(232)</text>
<text x="1140.7" y="987.8" font-size="16.5" fill="#111111" text-anchor="end" textLength="43.9" lengthAdjust="spacingAndGlyphs">(413)</text>
<text x="1300.7" y="987.8" font-size="16.5" fill="#111111" text-anchor="end" textLength="6.6" lengthAdjust="spacingAndGlyphs">-</text>
<text x="1437.7" y="987.8" font-size="16.5" fill="#111111" text-anchor="end" textLength="6.6" lengthAdjust="spacingAndGlyphs">-</text>
<text x="1574.7" y="987.8" font-size="16.5" fill="#111111" text-anchor="end" textLength="6.6" lengthAdjust="spacingAndGlyphs">-</text>
<text x="1711.7" y="987.8" font-size="16.5" fill="#111111" text-anchor="end" textLength="6.6" lengthAdjust="spacingAndGlyphs">-</text>
<text x="1848.7" y="987.8" font-size="16.5" fill="#111111" text-anchor="end" textLength="6.6" lengthAdjust="spacingAndGlyphs">-</text>
<text x="1985.7" y="987.8" font-size="16.5" fill="#111111" text-anchor="end" textLength="6.6" lengthAdjust="spacingAndGlyphs">-</text>
<text x="2122.7" y="987.8" font-size="16.5" fill="#111111" text-anchor="end" textLength="6.6" lengthAdjust="spacingAndGlyphs">-</text>
<text x="2259.7" y="987.8" font-size="16.5" fill="#111111" text-anchor="end" textLength="6.6" lengthAdjust="spacingAndGlyphs">-</text>
<text x="2396.7" y="987.8" font-size="16.5" fill="#111111" text-anchor="end" textLength="6.6" lengthAdjust="spacingAndGlyphs">-</text>
<text x="2533.7" y="987.8" font-size="16.5" fill="#111111" text-anchor="end" textLength="6.6" lengthAdjust="spacingAndGlyphs">-</text>
<text x="2670.7" y="987.8" font-size="16.5" fill="#111111" text-anchor="end" textLength="6.6" lengthAdjust="spacingAndGlyphs">-</text>
<text x="2807.8" y="987.8" font-size="16.5" fill="#111111" text-anchor="end" textLength="6.6" lengthAdjust="spacingAndGlyphs">-</text>
<rect x="70.3" y="992.3" width="1074.0" height="26.1" fill="#4AB0E6" />
<rect x="1175.2" y="992.3" width="1644.1" height="26.1" fill="#4AB0E6" />
<text x="85.6" y="1013.4" font-size="21.5" fill="#fff" font-weight="bold" textLength="204.5" lengthAdjust="spacingAndGlyphs">Net Profit After Tax</text>
<text x="660.2" y="1011.2" font-size="17" fill="#fff" font-weight="bold" text-anchor="end" textLength="47.6" lengthAdjust="spacingAndGlyphs">(285)</text>
<text x="780.2" y="1011.2" font-size="17" fill="#fff" font-weight="bold" text-anchor="end" textLength="36.9" lengthAdjust="spacingAndGlyphs">(69)</text>
<text x="892.9" y="1011.2" font-size="17" fill="#fff" font-weight="bold" text-anchor="end" textLength="32.3" lengthAdjust="spacingAndGlyphs">242</text>
<text x="1012.8" y="1011.2" font-size="17" fill="#fff" font-weight="bold" text-anchor="end" textLength="32.3" lengthAdjust="spacingAndGlyphs">695</text>
<text x="1132.8" y="1011.2" font-size="17" fill="#fff" font-weight="bold" text-anchor="end" textLength="48.5" lengthAdjust="spacingAndGlyphs">1,239</text>
<text x="1308.0" y="1011.2" font-size="17" fill="#fff" font-weight="bold" text-anchor="end" textLength="36.9" lengthAdjust="spacingAndGlyphs">(19)</text>
<text x="1445.0" y="1011.2" font-size="17" fill="#fff" font-weight="bold" text-anchor="end" textLength="36.9" lengthAdjust="spacingAndGlyphs">(21)</text>
<text x="1582.0" y="1011.2" font-size="17" fill="#fff" font-weight="bold" text-anchor="end" textLength="36.9" lengthAdjust="spacingAndGlyphs">(23)</text>
<text x="1719.0" y="1011.2" font-size="17" fill="#fff" font-weight="bold" text-anchor="end" textLength="36.9" lengthAdjust="spacingAndGlyphs">(24)</text>
<text x="1856.0" y="1011.2" font-size="17" fill="#fff" font-weight="bold" text-anchor="end" textLength="36.9" lengthAdjust="spacingAndGlyphs">(24)</text>
<text x="1993.0" y="1011.2" font-size="17" fill="#fff" font-weight="bold" text-anchor="end" textLength="36.9" lengthAdjust="spacingAndGlyphs">(25)</text>
<text x="2130.0" y="1011.2" font-size="17" fill="#fff" font-weight="bold" text-anchor="end" textLength="36.9" lengthAdjust="spacingAndGlyphs">(25)</text>
<text x="2267.0" y="1011.2" font-size="17" fill="#fff" font-weight="bold" text-anchor="end" textLength="36.9" lengthAdjust="spacingAndGlyphs">(25)</text>
<text x="2404.0" y="1011.2" font-size="17" fill="#fff" font-weight="bold" text-anchor="end" textLength="36.9" lengthAdjust="spacingAndGlyphs">(25)</text>
<text x="2541.0" y="1011.2" font-size="17" fill="#fff" font-weight="bold" text-anchor="end" textLength="36.9" lengthAdjust="spacingAndGlyphs">(25)</text>
<text x="2678.0" y="1011.2" font-size="17" fill="#fff" font-weight="bold" text-anchor="end" textLength="36.9" lengthAdjust="spacingAndGlyphs">(25)</text>
<text x="2815.1" y="1011.2" font-size="17" fill="#fff" font-weight="bold" text-anchor="end" textLength="36.9" lengthAdjust="spacingAndGlyphs">(25)</text>
<text x="92.7" y="1036.9" font-size="16.5" fill="#111111" font-style="italic" textLength="178.0" lengthAdjust="spacingAndGlyphs">Net Profit After Tax %</text>
<text x="659.9" y="1036.9" font-size="16.5" fill="#111111" font-style="italic" text-anchor="end" textLength="54.9" lengthAdjust="spacingAndGlyphs">(48%)</text>
<text x="779.8" y="1036.9" font-size="16.5" fill="#111111" font-style="italic" text-anchor="end" textLength="44.1" lengthAdjust="spacingAndGlyphs">(6%)</text>
<text x="892.4" y="1036.9" font-size="16.5" fill="#111111" font-style="italic" text-anchor="end" textLength="39.0" lengthAdjust="spacingAndGlyphs">12%</text>
<text x="1012.3" y="1036.9" font-size="16.5" fill="#111111" font-style="italic" text-anchor="end" textLength="39.0" lengthAdjust="spacingAndGlyphs">22%</text>
<text x="1132.3" y="1036.9" font-size="16.5" fill="#111111" font-style="italic" text-anchor="end" textLength="39.0" lengthAdjust="spacingAndGlyphs">29%</text>
<text x="1307.6" y="1036.9" font-size="16.5" fill="#111111" font-style="italic" text-anchor="end" textLength="54.9" lengthAdjust="spacingAndGlyphs">(38%)</text>
<text x="1444.6" y="1036.9" font-size="16.5" fill="#111111" font-style="italic" text-anchor="end" textLength="54.9" lengthAdjust="spacingAndGlyphs">(42%)</text>
<text x="1581.6" y="1036.9" font-size="16.5" fill="#111111" font-style="italic" text-anchor="end" textLength="54.9" lengthAdjust="spacingAndGlyphs">(48%)</text>
<text x="1718.6" y="1036.9" font-size="16.5" fill="#111111" font-style="italic" text-anchor="end" textLength="54.9" lengthAdjust="spacingAndGlyphs">(49%)</text>
<text x="1855.6" y="1036.9" font-size="16.5" fill="#111111" font-style="italic" text-anchor="end" textLength="54.9" lengthAdjust="spacingAndGlyphs">(50%)</text>
<text x="1992.6" y="1036.9" font-size="16.5" fill="#111111" font-style="italic" text-anchor="end" textLength="54.9" lengthAdjust="spacingAndGlyphs">(50%)</text>
<text x="2129.6" y="1036.9" font-size="16.5" fill="#111111" font-style="italic" text-anchor="end" textLength="54.9" lengthAdjust="spacingAndGlyphs">(50%)</text>
<text x="2266.6" y="1036.9" font-size="16.5" fill="#111111" font-style="italic" text-anchor="end" textLength="54.9" lengthAdjust="spacingAndGlyphs">(51%)</text>
<text x="2403.6" y="1036.9" font-size="16.5" fill="#111111" font-style="italic" text-anchor="end" textLength="54.9" lengthAdjust="spacingAndGlyphs">(51%)</text>
<text x="2540.6" y="1036.9" font-size="16.5" fill="#111111" font-style="italic" text-anchor="end" textLength="54.9" lengthAdjust="spacingAndGlyphs">(51%)</text>
<text x="2677.6" y="1036.9" font-size="16.5" fill="#111111" font-style="italic" text-anchor="end" textLength="54.9" lengthAdjust="spacingAndGlyphs">(51%)</text>
<text x="2814.7" y="1036.9" font-size="16.5" fill="#111111" font-style="italic" text-anchor="end" textLength="54.9" lengthAdjust="spacingAndGlyphs">(51%)</text>
<rect x="70.3" y="1561.6" width="1074.0" height="35.1" fill="#4B4FD3" />
<rect x="1175.2" y="1561.6" width="1644.1" height="35.1" fill="#4B4FD3" />
<text x="607.7" y="1589.1" font-size="27.5" fill="#fff" font-weight="bold" text-anchor="middle" textLength="713.0" lengthAdjust="spacingAndGlyphs">Balance Sheet ($'000) - 5 years to December 2030</text>
<text x="1997.2" y="1589.1" font-size="27.5" fill="#fff" font-weight="bold" text-anchor="middle" textLength="413.0" lengthAdjust="spacingAndGlyphs">Balance Sheet ($'000) - 2026</text>
<rect x="71.1" y="1602.0" width="472.8" height="23.0" fill="#6D73E7" />
<rect x="545.1" y="1602.0" width="118.8" height="23.0" fill="#6D73E7" />
<rect x="665.1" y="1602.0" width="118.7" height="23.0" fill="#6D73E7" />
<rect x="785.0" y="1602.0" width="118.8" height="23.0" fill="#6D73E7" />
<rect x="905.0" y="1602.0" width="118.7" height="23.0" fill="#6D73E7" />
<rect x="1024.9" y="1602.0" width="118.8" height="23.0" fill="#6D73E7" />
<rect x="1175.8" y="1602.0" width="135.8" height="23.0" fill="#6D73E7" />
<rect x="1312.8" y="1602.0" width="135.8" height="23.0" fill="#6D73E7" />
<rect x="1449.8" y="1602.0" width="135.8" height="23.0" fill="#6D73E7" />
<rect x="1586.8" y="1602.0" width="135.8" height="23.0" fill="#6D73E7" />
<rect x="1723.8" y="1602.0" width="135.8" height="23.0" fill="#6D73E7" />
<rect x="1860.8" y="1602.0" width="135.8" height="23.0" fill="#6D73E7" />
<rect x="1997.8" y="1602.0" width="135.8" height="23.0" fill="#6D73E7" />
<rect x="2134.8" y="1602.0" width="135.8" height="23.0" fill="#6D73E7" />
<rect x="2271.8" y="1602.0" width="135.8" height="23.0" fill="#6D73E7" />
<rect x="2408.8" y="1602.0" width="135.8" height="23.0" fill="#6D73E7" />
<rect x="2545.8" y="1602.0" width="135.8" height="23.0" fill="#6D73E7" />
<rect x="2682.8" y="1602.0" width="135.9" height="23.0" fill="#6D73E7" />
<text x="82.4" y="1620.8" font-size="19" fill="#fff" font-weight="bold" textLength="108.2" lengthAdjust="spacingAndGlyphs">Year Ending</text>
<text x="604.5" y="1620.8" font-size="17" fill="#fff" font-weight="bold" text-anchor="middle" textLength="43.1" lengthAdjust="spacingAndGlyphs">2026</text>
<text x="724.4" y="1620.8" font-size="17" fill="#fff" font-weight="bold" text-anchor="middle" textLength="43.1" lengthAdjust="spacingAndGlyphs">2027</text>
<text x="844.4" y="1620.8" font-size="17" fill="#fff" font-weight="bold" text-anchor="middle" textLength="43.1" lengthAdjust="spacingAndGlyphs">2028</text>
<text x="964.3" y="1620.8" font-size="17" fill="#fff" font-weight="bold" text-anchor="middle" textLength="43.1" lengthAdjust="spacingAndGlyphs">2029</text>
<text x="1084.3" y="1620.8" font-size="17" fill="#fff" font-weight="bold" text-anchor="middle" textLength="43.1" lengthAdjust="spacingAndGlyphs">2030</text>
<text x="1243.7" y="1620.8" font-size="17" fill="#fff" font-weight="bold" text-anchor="middle" textLength="32.2" lengthAdjust="spacingAndGlyphs">Jan</text>
<text x="1380.7" y="1620.8" font-size="17" fill="#fff" font-weight="bold" text-anchor="middle" textLength="33.2" lengthAdjust="spacingAndGlyphs">Feb</text>
<text x="1517.7" y="1620.8" font-size="17" fill="#fff" font-weight="bold" text-anchor="middle" textLength="33.3" lengthAdjust="spacingAndGlyphs">Mar</text>
<text x="1654.7" y="1620.8" font-size="17" fill="#fff" font-weight="bold" text-anchor="middle" textLength="32.2" lengthAdjust="spacingAndGlyphs">Apr</text>
<text x="1791.7" y="1620.8" font-size="17" fill="#fff" font-weight="bold" text-anchor="middle" textLength="36.4" lengthAdjust="spacingAndGlyphs">May</text>
<text x="1928.7" y="1620.8" font-size="17" fill="#fff" font-weight="bold" text-anchor="middle" textLength="33.2" lengthAdjust="spacingAndGlyphs">Jun</text>
<text x="2065.7" y="1620.8" font-size="17" fill="#fff" font-weight="bold" text-anchor="middle" textLength="27.0" lengthAdjust="spacingAndGlyphs">Jul</text>
<text x="2202.7" y="1620.8" font-size="17" fill="#fff" font-weight="bold" text-anchor="middle" textLength="36.3" lengthAdjust="spacingAndGlyphs">Aug</text>
<text x="2339.7" y="1620.8" font-size="17" fill="#fff" font-weight="bold" text-anchor="middle" textLength="34.3" lengthAdjust="spacingAndGlyphs">Sep</text>
<text x="2476.7" y="1620.8" font-size="17" fill="#fff" font-weight="bold" text-anchor="middle" textLength="31.2" lengthAdjust="spacingAndGlyphs">Oct</text>
<text x="2613.7" y="1620.8" font-size="17" fill="#fff" font-weight="bold" text-anchor="middle" textLength="35.3" lengthAdjust="spacingAndGlyphs">Nov</text>
<text x="2750.8" y="1620.8" font-size="17" fill="#fff" font-weight="bold" text-anchor="middle" textLength="34.3" lengthAdjust="spacingAndGlyphs">Dec</text>
<text x="74.6" y="1647.5" font-size="16.5" fill="#111111" textLength="110.4" lengthAdjust="spacingAndGlyphs">Current Assets</text>
<text x="660.9" y="1647.5" font-size="16.5" fill="#111111" text-anchor="end" textLength="34.1" lengthAdjust="spacingAndGlyphs">(56)</text>
<text x="780.8" y="1647.5" font-size="16.5" fill="#111111" text-anchor="end" textLength="34.1" lengthAdjust="spacingAndGlyphs">(67)</text>
<text x="893.8" y="1647.5" font-size="16.5" fill="#111111" text-anchor="end" textLength="29.5" lengthAdjust="spacingAndGlyphs">229</text>
<text x="1013.7" y="1647.5" font-size="16.5" fill="#111111" text-anchor="end" textLength="29.5" lengthAdjust="spacingAndGlyphs">980</text>
<text x="1133.7" y="1647.5" font-size="16.5" fill="#111111" text-anchor="end" textLength="44.2" lengthAdjust="spacingAndGlyphs">2,273</text>
<text x="1301.6" y="1647.5" font-size="16.5" fill="#111111" text-anchor="end" textLength="29.5" lengthAdjust="spacingAndGlyphs">728</text>
<text x="1438.6" y="1647.5" font-size="16.5" fill="#111111" text-anchor="end" textLength="29.5" lengthAdjust="spacingAndGlyphs">477</text>
<text x="1575.6" y="1647.5" font-size="16.5" fill="#111111" text-anchor="end" textLength="29.5" lengthAdjust="spacingAndGlyphs">318</text>
<text x="1712.6" y="1647.5" font-size="16.5" fill="#111111" text-anchor="end" textLength="29.5" lengthAdjust="spacingAndGlyphs">219</text>
<text x="1849.6" y="1647.5" font-size="16.5" fill="#111111" text-anchor="end" textLength="29.5" lengthAdjust="spacingAndGlyphs">160</text>
<text x="1986.6" y="1647.5" font-size="16.5" fill="#111111" text-anchor="end" textLength="28.1" lengthAdjust="spacingAndGlyphs">117</text>
<text x="2123.6" y="1647.5" font-size="16.5" fill="#111111" text-anchor="end" textLength="19.6" lengthAdjust="spacingAndGlyphs">76</text>
<text x="2260.6" y="1647.5" font-size="16.5" fill="#111111" text-anchor="end" textLength="19.6" lengthAdjust="spacingAndGlyphs">42</text>
<text x="2397.6" y="1647.5" font-size="16.5" fill="#111111" text-anchor="end" textLength="19.6" lengthAdjust="spacingAndGlyphs">12</text>
<text x="2541.6" y="1647.5" font-size="16.5" fill="#111111" text-anchor="end" textLength="34.1" lengthAdjust="spacingAndGlyphs">(14)</text>
<text x="2678.6" y="1647.5" font-size="16.5" fill="#111111" text-anchor="end" textLength="34.1" lengthAdjust="spacingAndGlyphs">(35)</text>
<text x="2815.7" y="1647.5" font-size="16.5" fill="#111111" text-anchor="end" textLength="34.1" lengthAdjust="spacingAndGlyphs">(56)</text>
<text x="74.6" y="1670.5" font-size="16.5" fill="#111111" textLength="146.9" lengthAdjust="spacingAndGlyphs">Non-Current Assets</text>
<text x="653.9" y="1670.5" font-size="16.5" fill="#111111" text-anchor="end" textLength="29.5" lengthAdjust="spacingAndGlyphs">786</text>
<text x="773.8" y="1670.5" font-size="16.5" fill="#111111" text-anchor="end" textLength="29.5" lengthAdjust="spacingAndGlyphs">700</text>
<text x="893.8" y="1670.5" font-size="16.5" fill="#111111" text-anchor="end" textLength="29.5" lengthAdjust="spacingAndGlyphs">614</text>
<text x="1013.7" y="1670.5" font-size="16.5" fill="#111111" text-anchor="end" textLength="29.5" lengthAdjust="spacingAndGlyphs">528</text>
<text x="1133.7" y="1670.5" font-size="16.5" fill="#111111" text-anchor="end" textLength="29.5" lengthAdjust="spacingAndGlyphs">443</text>
<text x="1301.6" y="1670.5" font-size="16.5" fill="#111111" text-anchor="end" textLength="29.5" lengthAdjust="spacingAndGlyphs">185</text>
<text x="1438.6" y="1670.5" font-size="16.5" fill="#111111" text-anchor="end" textLength="29.5" lengthAdjust="spacingAndGlyphs">418</text>
<text x="1575.6" y="1670.5" font-size="16.5" fill="#111111" text-anchor="end" textLength="29.5" lengthAdjust="spacingAndGlyphs">649</text>
<text x="1712.6" y="1670.5" font-size="16.5" fill="#111111" text-anchor="end" textLength="29.5" lengthAdjust="spacingAndGlyphs">723</text>
<text x="1849.6" y="1670.5" font-size="16.5" fill="#111111" text-anchor="end" textLength="29.5" lengthAdjust="spacingAndGlyphs">755</text>
<text x="1986.6" y="1670.5" font-size="16.5" fill="#111111" text-anchor="end" textLength="29.5" lengthAdjust="spacingAndGlyphs">773</text>
<text x="2123.6" y="1670.5" font-size="16.5" fill="#111111" text-anchor="end" textLength="29.5" lengthAdjust="spacingAndGlyphs">787</text>
<text x="2260.6" y="1670.5" font-size="16.5" fill="#111111" text-anchor="end" textLength="29.5" lengthAdjust="spacingAndGlyphs">795</text>
<text x="2397.6" y="1670.5" font-size="16.5" fill="#111111" text-anchor="end" textLength="29.5" lengthAdjust="spacingAndGlyphs">798</text>
<text x="2534.6" y="1670.5" font-size="16.5" fill="#111111" text-anchor="end" textLength="29.5" lengthAdjust="spacingAndGlyphs">797</text>
<text x="2671.6" y="1670.5" font-size="16.5" fill="#111111" text-anchor="end" textLength="29.5" lengthAdjust="spacingAndGlyphs">793</text>
<text x="2808.7" y="1670.5" font-size="16.5" fill="#111111" text-anchor="end" textLength="29.5" lengthAdjust="spacingAndGlyphs">786</text>
<rect x="70.3" y="1065.5" width="1074.0" height="35.1" fill="#4B4FD3" />
<rect x="1175.2" y="1065.5" width="1644.1" height="35.1" fill="#4B4FD3" />
<text x="607.7" y="1093.0" font-size="27.5" fill="#fff" font-weight="bold" text-anchor="middle" textLength="777.5" lengthAdjust="spacingAndGlyphs">Income Statement ($'000) - 5 years to December 2030</text>
<text x="1997.2" y="1093.0" font-size="27.5" fill="#fff" font-weight="bold" text-anchor="middle" textLength="479.0" lengthAdjust="spacingAndGlyphs">Income Statement ($'000) - 2026</text>
<line x1="328.0" y1="1131.5" x2="373.3" y2="1131.5" stroke="#EC7B6F" stroke-width="3" />
<circle cx="350.6" cy="1131.5" r="4.2" fill="#EC7B6F"/>
<text x="378.4" y="1137.7" font-size="19" fill="#111" font-weight="bold" textLength="78.6" lengthAdjust="spacingAndGlyphs">Revenue</text>
<line x1="489.0" y1="1131.5" x2="535.0" y2="1131.5" stroke="#5F9E3C" stroke-width="3" />
<circle cx="512.0" cy="1131.5" r="4.2" fill="#5F9E3C"/>
<text x="544.5" y="1137.7" font-size="19" fill="#111" font-weight="bold" textLength="69.5" lengthAdjust="spacingAndGlyphs">EBITDA</text>
<line x1="651.7" y1="1131.5" x2="698.0" y2="1131.5" stroke="#4B4FD3" stroke-width="3" />
<circle cx="674.9" cy="1131.5" r="4.2" fill="#4B4FD3"/>
<text x="707.0" y="1137.7" font-size="19" fill="#111" font-weight="bold" textLength="180.0" lengthAdjust="spacingAndGlyphs">Net Profit After Tax</text>
<line x1="70.2" y1="1159.2" x2="1043.4" y2="1159.2" stroke="#55A9CF" stroke-width="1.3" />
<line x1="70.2" y1="1215.4" x2="1043.4" y2="1215.4" stroke="#55A9CF" stroke-width="1.3" />
<line x1="70.2" y1="1271.7" x2="1043.4" y2="1271.7" stroke="#55A9CF" stroke-width="1.3" />
<line x1="70.2" y1="1327.9" x2="1043.4" y2="1327.9" stroke="#55A9CF" stroke-width="1.3" />
<line x1="70.2" y1="1384.1" x2="1043.4" y2="1384.1" stroke="#55A9CF" stroke-width="1.3" />
<line x1="70.2" y1="1440.4" x2="1043.4" y2="1440.4" stroke="#3F5C86" stroke-width="1.3" />
<line x1="70.2" y1="1496.6" x2="1043.4" y2="1496.6" stroke="#55A9CF" stroke-width="1.3" />
<line x1="70.2" y1="1159.2" x2="70.2" y2="1496.6" stroke="#55A9CF" stroke-width="1.3" />
<line x1="264.8" y1="1159.2" x2="264.8" y2="1496.6" stroke="#55A9CF" stroke-width="1.3" />
<line x1="459.5" y1="1159.2" x2="459.5" y2="1496.6" stroke="#55A9CF" stroke-width="1.3" />
<line x1="654.1" y1="1159.2" x2="654.1" y2="1496.6" stroke="#55A9CF" stroke-width="1.3" />
<line x1="848.8" y1="1159.2" x2="848.8" y2="1496.6" stroke="#55A9CF" stroke-width="1.3" />
<line x1="1043.4" y1="1159.2" x2="1043.4" y2="1496.6" stroke="#55A9CF" stroke-width="1.3" />
<line x1="70.2" y1="1440.4" x2="1043.4" y2="1440.4" stroke="#3F5C86" stroke-width="1.6" />
<text x="1066.0" y="1165.7" font-size="18.5" fill="#111" font-weight="bold" textLength="51.9" lengthAdjust="spacingAndGlyphs">5,000</text>
<text x="1066.0" y="1221.9" font-size="18.5" fill="#111" font-weight="bold" textLength="51.9" lengthAdjust="spacingAndGlyphs">4,000</text>
<text x="1066.0" y="1278.2" font-size="18.5" fill="#111" font-weight="bold" textLength="51.9" lengthAdjust="spacingAndGlyphs">3,000</text>
<text x="1066.0" y="1334.4" font-size="18.5" fill="#111" font-weight="bold" textLength="51.9" lengthAdjust="spacingAndGlyphs">2,000</text>
<text x="1066.0" y="1390.6" font-size="18.5" fill="#111" font-weight="bold" textLength="51.9" lengthAdjust="spacingAndGlyphs">1,000</text>
<text x="1066.0" y="1446.9" font-size="18.5" fill="#111" font-weight="bold">-</text>
<text x="1061.0" y="1503.1" font-size="18.5" fill="#111" font-weight="bold" textLength="65.7" lengthAdjust="spacingAndGlyphs">(1,000)</text>
<polyline points="167.5,1407.2 362.2,1370.4 556.8,1325.3 751.4,1264.5 946.1,1198.1" fill="none" stroke="#EC7B6F" stroke-width="2.6" stroke-linejoin="round"/>
<circle cx="167.5" cy="1407.2" r="5.4" fill="#EC7B6F"/>
<circle cx="362.2" cy="1370.4" r="5.4" fill="#EC7B6F"/>
<circle cx="556.8" cy="1325.3" r="5.4" fill="#EC7B6F"/>
<circle cx="751.4" cy="1264.5" r="5.4" fill="#EC7B6F"/>
<circle cx="946.1" cy="1198.1" r="5.4" fill="#EC7B6F"/>
<polyline points="167.5,1451.3 362.2,1438.5 556.8,1416.6 751.4,1382.8 946.1,1342.2" fill="none" stroke="#5F9E3C" stroke-width="2.6" stroke-linejoin="round"/>
<circle cx="167.5" cy="1451.3" r="5.4" fill="#5F9E3C"/>
<circle cx="362.2" cy="1438.5" r="5.4" fill="#5F9E3C"/>
<circle cx="556.8" cy="1416.6" r="5.4" fill="#5F9E3C"/>
<circle cx="751.4" cy="1382.8" r="5.4" fill="#5F9E3C"/>
<circle cx="946.1" cy="1342.2" r="5.4" fill="#5F9E3C"/>
<polyline points="167.5,1456.4 362.2,1444.2 556.8,1426.8 751.4,1401.3 946.1,1370.7" fill="none" stroke="#4B4FD3" stroke-width="2.6" stroke-linejoin="round"/>
<circle cx="167.5" cy="1456.4" r="5.4" fill="#4B4FD3"/>
<circle cx="362.2" cy="1444.2" r="5.4" fill="#4B4FD3"/>
<circle cx="556.8" cy="1426.8" r="5.4" fill="#4B4FD3"/>
<circle cx="751.4" cy="1401.3" r="5.4" fill="#4B4FD3"/>
<circle cx="946.1" cy="1370.7" r="5.4" fill="#4B4FD3"/>
<text x="167.5" y="1527.8" font-size="18.5" fill="#111" font-weight="bold" text-anchor="middle" textLength="46.1" lengthAdjust="spacingAndGlyphs">2026</text>
<text x="362.2" y="1527.8" font-size="18.5" fill="#111" font-weight="bold" text-anchor="middle" textLength="46.1" lengthAdjust="spacingAndGlyphs">2027</text>
<text x="556.8" y="1527.8" font-size="18.5" fill="#111" font-weight="bold" text-anchor="middle" textLength="46.1" lengthAdjust="spacingAndGlyphs">2028</text>
<text x="751.4" y="1527.8" font-size="18.5" fill="#111" font-weight="bold" text-anchor="middle" textLength="46.1" lengthAdjust="spacingAndGlyphs">2029</text>
<text x="946.1" y="1527.8" font-size="18.5" fill="#111" font-weight="bold" text-anchor="middle" textLength="46.1" lengthAdjust="spacingAndGlyphs">2030</text>
<line x1="1718.4" y1="1131.5" x2="1763.8" y2="1131.5" stroke="#EC7B6F" stroke-width="3" />
<circle cx="1741.1" cy="1131.5" r="4.2" fill="#EC7B6F"/>
<text x="1768.0" y="1137.7" font-size="19" fill="#111" font-weight="bold" textLength="79.6" lengthAdjust="spacingAndGlyphs">Revenue</text>
<line x1="1879.0" y1="1131.5" x2="1925.7" y2="1131.5" stroke="#5F9E3C" stroke-width="3" />
<circle cx="1902.3" cy="1131.5" r="4.2" fill="#5F9E3C"/>
<text x="1934.8" y="1137.7" font-size="19" fill="#111" font-weight="bold" textLength="69.8" lengthAdjust="spacingAndGlyphs">EBITDA</text>
<line x1="2041.6" y1="1131.5" x2="2088.4" y2="1131.5" stroke="#4B4FD3" stroke-width="3" />
<circle cx="2065.0" cy="1131.5" r="4.2" fill="#4B4FD3"/>
<text x="2096.8" y="1137.7" font-size="19" fill="#111" font-weight="bold" textLength="180.0" lengthAdjust="spacingAndGlyphs">Net Profit After Tax</text>
<line x1="1175.4" y1="1159.8" x2="2752.2" y2="1159.8" stroke="#55A9CF" stroke-width="1.3" />
<line x1="1175.4" y1="1197.3" x2="2752.2" y2="1197.3" stroke="#55A9CF" stroke-width="1.3" />
<line x1="1175.4" y1="1234.7" x2="2752.2" y2="1234.7" stroke="#55A9CF" stroke-width="1.3" />
<line x1="1175.4" y1="1272.2" x2="2752.2" y2="1272.2" stroke="#55A9CF" stroke-width="1.3" />
<line x1="1175.4" y1="1309.7" x2="2752.2" y2="1309.7" stroke="#55A9CF" stroke-width="1.3" />
<line x1="1175.4" y1="1347.1" x2="2752.2" y2="1347.1" stroke="#55A9CF" stroke-width="1.3" />
<line x1="1175.4" y1="1384.6" x2="2752.2" y2="1384.6" stroke="#55A9CF" stroke-width="1.3" />
<line x1="1175.4" y1="1422.1" x2="2752.2" y2="1422.1" stroke="#55A9CF" stroke-width="1.3" />
<line x1="1175.4" y1="1459.5" x2="2752.2" y2="1459.5" stroke="#55A9CF" stroke-width="1.3" />
<line x1="1175.4" y1="1497.0" x2="2752.2" y2="1497.0" stroke="#55A9CF" stroke-width="1.3" />
<line x1="1175.4" y1="1159.8" x2="1175.4" y2="1497.0" stroke="#55A9CF" stroke-width="1.3" />
<line x1="1306.8" y1="1159.8" x2="1306.8" y2="1497.0" stroke="#55A9CF" stroke-width="1.3" />
<line x1="1438.2" y1="1159.8" x2="1438.2" y2="1497.0" stroke="#55A9CF" stroke-width="1.3" />
<line x1="1569.6" y1="1159.8" x2="1569.6" y2="1497.0" stroke="#55A9CF" stroke-width="1.3" />
<line x1="1701.0" y1="1159.8" x2="1701.0" y2="1497.0" stroke="#55A9CF" stroke-width="1.3" />
<line x1="1832.4" y1="1159.8" x2="1832.4" y2="1497.0" stroke="#55A9CF" stroke-width="1.3" />
<line x1="1963.8" y1="1159.8" x2="1963.8" y2="1497.0" stroke="#55A9CF" stroke-width="1.3" />
<line x1="2095.2" y1="1159.8" x2="2095.2" y2="1497.0" stroke="#55A9CF" stroke-width="1.3" />
<line x1="2226.6" y1="1159.8" x2="2226.6" y2="1497.0" stroke="#55A9CF" stroke-width="1.3" />
<line x1="2358.0" y1="1159.8" x2="2358.0" y2="1497.0" stroke="#55A9CF" stroke-width="1.3" />
<line x1="2489.4" y1="1159.8" x2="2489.4" y2="1497.0" stroke="#55A9CF" stroke-width="1.3" />
<line x1="2620.8" y1="1159.8" x2="2620.8" y2="1497.0" stroke="#55A9CF" stroke-width="1.3" />
<line x1="2752.2" y1="1159.8" x2="2752.2" y2="1497.0" stroke="#55A9CF" stroke-width="1.3" />
<text x="2774.0" y="1166.3" font-size="18.5" fill="#111" font-weight="bold" textLength="23.0" lengthAdjust="spacingAndGlyphs">60</text>
<text x="2774.0" y="1203.8" font-size="18.5" fill="#111" font-weight="bold" textLength="23.0" lengthAdjust="spacingAndGlyphs">50</text>
<text x="2774.0" y="1241.2" font-size="18.5" fill="#111" font-weight="bold" textLength="23.0" lengthAdjust="spacingAndGlyphs">40</text>
<text x="2774.0" y="1278.7" font-size="18.5" fill="#111" font-weight="bold" textLength="23.0" lengthAdjust="spacingAndGlyphs">30</text>
<text x="2774.0" y="1316.2" font-size="18.5" fill="#111" font-weight="bold" textLength="23.0" lengthAdjust="spacingAndGlyphs">20</text>
<text x="2774.0" y="1353.6" font-size="18.5" fill="#111" font-weight="bold" textLength="23.0" lengthAdjust="spacingAndGlyphs">10</text>
<text x="2774.0" y="1391.1" font-size="18.5" fill="#111" font-weight="bold" textLength="6.9" lengthAdjust="spacingAndGlyphs">-</text>
<text x="2769.0" y="1428.6" font-size="18.5" fill="#111" font-weight="bold" textLength="36.8" lengthAdjust="spacingAndGlyphs">(10)</text>
<text x="2769.0" y="1466.0" font-size="18.5" fill="#111" font-weight="bold" textLength="36.8" lengthAdjust="spacingAndGlyphs">(20)</text>
<text x="2769.0" y="1503.5" font-size="18.5" fill="#111" font-weight="bold" textLength="36.8" lengthAdjust="spacingAndGlyphs">(30)</text>
<polyline points="1241.1,1200.6 1372.5,1200.6 1503.9,1200.6 1635.3,1200.6 1766.7,1200.6 1898.1,1200.6 2029.5,1200.6 2160.9,1200.6 2292.3,1200.6 2423.7,1200.6 2555.1,1200.6 2686.5,1200.6" fill="none" stroke="#EC7B6F" stroke-width="2.6" stroke-linejoin="round"/>
<circle cx="1241.1" cy="1200.6" r="5.4" fill="#EC7B6F"/>
<circle cx="1372.5" cy="1200.6" r="5.4" fill="#EC7B6F"/>
<circle cx="1503.9" cy="1200.6" r="5.4" fill="#EC7B6F"/>
<circle cx="1635.3" cy="1200.6" r="5.4" fill="#EC7B6F"/>
<circle cx="1766.7" cy="1200.6" r="5.4" fill="#EC7B6F"/>
<circle cx="1898.1" cy="1200.6" r="5.4" fill="#EC7B6F"/>
<circle cx="2029.5" cy="1200.6" r="5.4" fill="#EC7B6F"/>
<circle cx="2160.9" cy="1200.6" r="5.4" fill="#EC7B6F"/>
<circle cx="2292.3" cy="1200.6" r="5.4" fill="#EC7B6F"/>
<circle cx="2423.7" cy="1200.6" r="5.4" fill="#EC7B6F"/>
<circle cx="2555.1" cy="1200.6" r="5.4" fill="#EC7B6F"/>
<circle cx="2686.5" cy="1200.6" r="5.4" fill="#EC7B6F"/>
<polyline points="1241.1,1445.3 1372.5,1445.3 1503.9,1445.3 1635.3,1445.3 1766.7,1445.3 1898.1,1445.3 2029.5,1445.3 2160.9,1445.3 2292.3,1445.3 2423.7,1445.3 2555.1,1445.3 2686.5,1445.3" fill="none" stroke="#5F9E3C" stroke-width="2.6" stroke-linejoin="round"/>
<circle cx="1241.1" cy="1445.3" r="5.4" fill="#5F9E3C"/>
<circle cx="1372.5" cy="1445.3" r="5.4" fill="#5F9E3C"/>
<circle cx="1503.9" cy="1445.3" r="5.4" fill="#5F9E3C"/>
<circle cx="1635.3" cy="1445.3" r="5.4" fill="#5F9E3C"/>
<circle cx="1766.7" cy="1445.3" r="5.4" fill="#5F9E3C"/>
<circle cx="1898.1" cy="1445.3" r="5.4" fill="#5F9E3C"/>
<circle cx="2029.5" cy="1445.3" r="5.4" fill="#5F9E3C"/>
<circle cx="2160.9" cy="1445.3" r="5.4" fill="#5F9E3C"/>
<circle cx="2292.3" cy="1445.3" r="5.4" fill="#5F9E3C"/>
<circle cx="2423.7" cy="1445.3" r="5.4" fill="#5F9E3C"/>
<circle cx="2555.1" cy="1445.3" r="5.4" fill="#5F9E3C"/>
<circle cx="2686.5" cy="1445.3" r="5.4" fill="#5F9E3C"/>
<polyline points="1241.1,1453.5 1372.5,1461.4 1503.9,1470.8 1635.3,1474.1 1766.7,1475.3 1898.1,1476.8 2029.5,1476.8 2160.9,1477.5 2292.3,1477.5 2423.7,1477.5 2555.1,1477.5 2686.5,1477.5" fill="none" stroke="#4B4FD3" stroke-width="2.6" stroke-linejoin="round"/>
<circle cx="1241.1" cy="1453.5" r="5.4" fill="#4B4FD3"/>
<circle cx="1372.5" cy="1461.4" r="5.4" fill="#4B4FD3"/>
<circle cx="1503.9" cy="1470.8" r="5.4" fill="#4B4FD3"/>
<circle cx="1635.3" cy="1474.1" r="5.4" fill="#4B4FD3"/>
<circle cx="1766.7" cy="1475.3" r="5.4" fill="#4B4FD3"/>
<circle cx="1898.1" cy="1476.8" r="5.4" fill="#4B4FD3"/>
<circle cx="2029.5" cy="1476.8" r="5.4" fill="#4B4FD3"/>
<circle cx="2160.9" cy="1477.5" r="5.4" fill="#4B4FD3"/>
<circle cx="2292.3" cy="1477.5" r="5.4" fill="#4B4FD3"/>
<circle cx="2423.7" cy="1477.5" r="5.4" fill="#4B4FD3"/>
<circle cx="2555.1" cy="1477.5" r="5.4" fill="#4B4FD3"/>
<circle cx="2686.5" cy="1477.5" r="5.4" fill="#4B4FD3"/>
<text x="1241.1" y="1527.8" font-size="18.5" fill="#111" font-weight="bold" text-anchor="middle" textLength="35.1" lengthAdjust="spacingAndGlyphs">Jan</text>
<text x="1372.5" y="1527.8" font-size="18.5" fill="#111" font-weight="bold" text-anchor="middle" textLength="36.2" lengthAdjust="spacingAndGlyphs">Feb</text>
<text x="1503.9" y="1527.8" font-size="18.5" fill="#111" font-weight="bold" text-anchor="middle" textLength="36.2" lengthAdjust="spacingAndGlyphs">Mar</text>
<text x="1635.3" y="1527.8" font-size="18.5" fill="#111" font-weight="bold" text-anchor="middle" textLength="35.0" lengthAdjust="spacingAndGlyphs">Apr</text>
<text x="1766.7" y="1527.8" font-size="18.5" fill="#111" font-weight="bold" text-anchor="middle" textLength="39.6" lengthAdjust="spacingAndGlyphs">May</text>
<text x="1898.1" y="1527.8" font-size="18.5" fill="#111" font-weight="bold" text-anchor="middle" textLength="36.2" lengthAdjust="spacingAndGlyphs">Jun</text>
<text x="2029.5" y="1527.8" font-size="18.5" fill="#111" font-weight="bold" text-anchor="middle" textLength="29.4" lengthAdjust="spacingAndGlyphs">Jul</text>
<text x="2160.9" y="1527.8" font-size="18.5" fill="#111" font-weight="bold" text-anchor="middle" textLength="39.6" lengthAdjust="spacingAndGlyphs">Aug</text>
<text x="2292.3" y="1527.8" font-size="18.5" fill="#111" font-weight="bold" text-anchor="middle" textLength="37.3" lengthAdjust="spacingAndGlyphs">Sep</text>
<text x="2423.7" y="1527.8" font-size="18.5" fill="#111" font-weight="bold" text-anchor="middle" textLength="33.9" lengthAdjust="spacingAndGlyphs">Oct</text>
<text x="2555.1" y="1527.8" font-size="18.5" fill="#111" font-weight="bold" text-anchor="middle" textLength="38.4" lengthAdjust="spacingAndGlyphs">Nov</text>
<text x="2686.5" y="1527.8" font-size="18.5" fill="#111" font-weight="bold" text-anchor="middle" textLength="37.3" lengthAdjust="spacingAndGlyphs">Dec</text>
<rect x="11.0" y="1670.0" width="2879.0" height="48.0" fill="#0b0b0b" />
<rect x="11.0" y="1717.5" width="2879.0" height="1.3" fill="#353535" />
<rect x="11.0" y="1718.5" width="2879.0" height="32.5" fill="#141414" />
<path d="M56 1686 L47 1693.5 L56 1701" fill="none" stroke="#9a9a9a" stroke-width="1.8"/>
<path d="M95 1686 L104 1693.5 L95 1701" fill="none" stroke="#9a9a9a" stroke-width="1.8"/>
<text x="190.0" y="1703.0" font-size="20" fill="#f0f0f0" textLength="78.8" lengthAdjust="spacingAndGlyphs">Contents</text>
<line x1="292.5" y1="1680.5" x2="292.5" y2="1708.0" stroke="#6a6a6a" stroke-width="1" />
<line x1="433.5" y1="1680.5" x2="433.5" y2="1708.0" stroke="#6a6a6a" stroke-width="1" />
<line x1="552.5" y1="1680.5" x2="552.5" y2="1708.0" stroke="#6a6a6a" stroke-width="1" />
<line x1="723.5" y1="1680.5" x2="723.5" y2="1708.0" stroke="#6a6a6a" stroke-width="1" />
<line x1="825.5" y1="1680.5" x2="825.5" y2="1708.0" stroke="#6a6a6a" stroke-width="1" />
<line x1="925.5" y1="1680.5" x2="925.5" y2="1708.0" stroke="#6a6a6a" stroke-width="1" />
<line x1="1052.5" y1="1680.5" x2="1052.5" y2="1708.0" stroke="#6a6a6a" stroke-width="1" />
<line x1="1154.5" y1="1680.5" x2="1154.5" y2="1708.0" stroke="#6a6a6a" stroke-width="1" />
<line x1="1209.5" y1="1680.5" x2="1209.5" y2="1708.0" stroke="#6a6a6a" stroke-width="1" />
<line x1="1270.5" y1="1680.5" x2="1270.5" y2="1708.0" stroke="#6a6a6a" stroke-width="1" />
<line x1="1331.5" y1="1680.5" x2="1331.5" y2="1708.0" stroke="#6a6a6a" stroke-width="1" />
<line x1="1459.5" y1="1680.5" x2="1459.5" y2="1708.0" stroke="#6a6a6a" stroke-width="1" />
<line x1="1714.5" y1="1680.5" x2="1714.5" y2="1708.0" stroke="#6a6a6a" stroke-width="1" />
<line x1="1775.5" y1="1680.5" x2="1775.5" y2="1708.0" stroke="#6a6a6a" stroke-width="1" />
<line x1="1860.5" y1="1680.5" x2="1860.5" y2="1708.0" stroke="#6a6a6a" stroke-width="1" />
<line x1="1958.5" y1="1680.5" x2="1958.5" y2="1708.0" stroke="#6a6a6a" stroke-width="1" />
<line x1="2035.5" y1="1680.5" x2="2035.5" y2="1708.0" stroke="#6a6a6a" stroke-width="1" />
<defs><linearGradient id="actg" x1="0" y1="0" x2="0" y2="1"><stop offset="0" stop-color="#ffffff"/><stop offset="1" stop-color="#dbe9f6"/></linearGradient></defs>
<rect x="299.0" y="1675.7" width="127.6" height="36" rx="6" fill="#F8EC6B"/>
<text x="362.8" y="1702.5" font-size="20" fill="#111" text-anchor="middle" textLength="96.4" lengthAdjust="spacingAndGlyphs">Dashboard</text>
<rect x="439.8" y="1675.7" width="105.7" height="36" rx="6" fill="#F8EC6B"/>
<text x="492.6" y="1702.5" font-size="20" fill="#111" text-anchor="middle" textLength="78.9" lengthAdjust="spacingAndGlyphs">Revenue</text>
<rect x="559.0" y="1675.7" width="158.0" height="36" rx="6" fill="#F8EC6B"/>
<text x="638.0" y="1702.5" font-size="20" fill="#111" text-anchor="middle" textLength="136.8" lengthAdjust="spacingAndGlyphs">COGS &amp; OPEX</text>
<rect x="730.6" y="1675.7" width="87.7" height="36" rx="6" fill="#F8EC6B"/>
<text x="774.5" y="1702.5" font-size="20" fill="#111" text-anchor="middle" textLength="60.2" lengthAdjust="spacingAndGlyphs">Payroll</text>
<rect x="832.0" y="1675.7" width="86.6" height="36" rx="6" fill="#F8EC6B"/>
<text x="875.3" y="1702.5" font-size="20" fill="#111" text-anchor="middle" textLength="66.8" lengthAdjust="spacingAndGlyphs">CAPEX</text>
<rect x="931.8" y="1675.7" width="113.0" height="36" rx="6" fill="#F8EC6B"/>
<text x="988.3" y="1702.5" font-size="20" fill="#111" text-anchor="middle" textLength="83.2" lengthAdjust="spacingAndGlyphs">CapTable</text>
<rect x="1058.0" y="1675.7" width="89.6" height="36" rx="6" fill="#F8EC6B"/>
<text x="1102.8" y="1702.5" font-size="20" fill="#111" text-anchor="middle" textLength="61.3" lengthAdjust="spacingAndGlyphs">Capital</text>
<rect x="1161.0" y="1675.7" width="41.8" height="36" rx="6" fill="#4AB0E6"/>
<text x="1181.9" y="1702.5" font-size="20" fill="#111" text-anchor="middle" textLength="18.6" lengthAdjust="spacingAndGlyphs">IS</text>
<rect x="1215.7" y="1675.7" width="48.3" height="36" rx="6" fill="#4AB0E6"/>
<text x="1239.8" y="1702.5" font-size="20" fill="#111" text-anchor="middle" textLength="26.3" lengthAdjust="spacingAndGlyphs">CF</text>
<rect x="1277.0" y="1675.7" width="48.0" height="36" rx="6" fill="#4AB0E6"/>
<text x="1301.0" y="1702.5" font-size="20" fill="#111" text-anchor="middle" textLength="26.3" lengthAdjust="spacingAndGlyphs">BS</text>
<rect x="1338.0" y="1675.7" width="115.0" height="36" rx="6" fill="#4AB0E6"/>
<text x="1395.5" y="1702.5" font-size="20" fill="#111" text-anchor="middle" textLength="87.6" lengthAdjust="spacingAndGlyphs">Scenarios</text>
<rect x="1465.6" y="1675.7" width="115.2" height="36" rx="6" fill="#4AB0E6"/>
<text x="1523.2" y="1702.5" font-size="20" fill="#111" text-anchor="middle" textLength="80.7" lengthAdjust="spacingAndGlyphs">Valuation</text>
<path d="M1593.7 1670 L1708.2 1670 L1708.2 1705 Q1708.2 1712 1701.2 1712 L1600.7 1712 Q1593.7 1712 1593.7 1705 Z" fill="url(#actg)"/>
<text x="1651.0" y="1697.5" font-size="20" fill="#1a1a1a" text-anchor="middle" textLength="84.7" lengthAdjust="spacingAndGlyphs" stroke="#1a1a1a" stroke-width="0.5">Summary</text>
<rect x="1606.0" y="1704.2" width="89.7" height="2.6" fill="#1e7b45" />
<rect x="1721.0" y="1675.7" width="47.0" height="36" rx="6" fill="#4AB0E6"/>
<text x="1744.5" y="1702.5" font-size="20" fill="#111" text-anchor="middle" textLength="26.3" lengthAdjust="spacingAndGlyphs">BE</text>
<rect x="1782.0" y="1675.7" width="71.8" height="36" rx="6" fill="#4AB0E6"/>
<text x="1817.9" y="1702.5" font-size="20" fill="#111" text-anchor="middle" textLength="49.2" lengthAdjust="spacingAndGlyphs">ROIC</text>
<rect x="1867.0" y="1675.7" width="84.5" height="36" rx="6" fill="#4AB0E6"/>
<text x="1909.2" y="1702.5" font-size="20" fill="#111" text-anchor="middle" textLength="58.0" lengthAdjust="spacingAndGlyphs">Charts</text>
<rect x="1964.7" y="1675.7" width="63.7" height="36" rx="6" fill="#4AB0E6"/>
<text x="1996.6" y="1702.5" font-size="20" fill="#111" text-anchor="middle" textLength="41.6" lengthAdjust="spacingAndGlyphs">KPIs</text>
<svg x="2042" y="1675.7" width="30" height="36" overflow="hidden"><rect x="0" y="0" width="60" height="36" rx="6" fill="#4AB0E6"/><text x="14" y="26.8" font-size="20" fill="#111">Sc</text></svg>
<circle cx="2088.5" cy="1693" r="2" fill="#e0e0e0"/>
<circle cx="2095.5" cy="1693" r="2" fill="#e0e0e0"/>
<circle cx="2102.5" cy="1693" r="2" fill="#e0e0e0"/>
<line x1="2134.7" y1="1693.5" x2="2151.7" y2="1693.5" stroke="#e0e0e0" stroke-width="1.8" />
<line x1="2143.2" y1="1685.0" x2="2143.2" y2="1702.0" stroke="#e0e0e0" stroke-width="1.8" />
<circle cx="2191.8" cy="1686.5" r="1.9" fill="#e0e0e0"/>
<circle cx="2191.8" cy="1693.5" r="1.9" fill="#e0e0e0"/>
<circle cx="2191.8" cy="1700.5" r="1.9" fill="#e0e0e0"/>
<rect x="2216.6" y="1680" width="641.4" height="25.6" rx="12.8" fill="#161616"/>
<path d="M2234 1686.5 L2224.5 1693 L2234 1699.5 Z" fill="#9a9a9a"/>
<rect x="2241.7" y="1687" width="537" height="12.4" rx="6.2" fill="#9b9b9b"/>
<path d="M2841 1686.5 L2851.5 1693 L2841 1699.5 Z" fill="#9a9a9a"/>
<text x="26.8" y="1741.0" font-size="17" fill="#e6e6e6" textLength="43.2" lengthAdjust="spacingAndGlyphs">Ready</text>
<g fill="none" stroke="#e0e0e0" stroke-width="1.5"><rect x="98.5" y="1728.5" width="21" height="15"/><line x1="98.5" y1="1732" x2="119.5" y2="1732"/><circle cx="113" cy="1739" r="4.5"/><line x1="101.5" y1="1736" x2="106" y2="1736"/><line x1="101.5" y1="1739.5" x2="106" y2="1739.5"/></g>
<g fill="none" stroke="#e0e0e0" stroke-width="1.6"><circle cx="156" cy="1727.5" r="2.5"/><path d="M147 1732 L165 1732 M156 1732 L156 1738 L150 1745 M156 1738 L162 1745"/><path d="M160 1740 L167 1746 M167 1740 L160 1746"/></g>
<text x="173.0" y="1741.0" font-size="16" fill="#ececec" font-weight="bold" textLength="188.5" lengthAdjust="spacingAndGlyphs">Accessibility: Investigate</text>
<rect x="2445.0" y="1718.5" width="60.0" height="32.5" fill="#262626" />
<g fill="none" stroke="#e6e6e6" stroke-width="1.5"><rect x="2464.5" y="1725.5" width="19" height="19"/><line x1="2470.8" y1="1725.5" x2="2470.8" y2="1744.5"/><line x1="2477.2" y1="1725.5" x2="2477.2" y2="1744.5"/><line x1="2464.5" y1="1731.8" x2="2483.5" y2="1731.8"/><line x1="2464.5" y1="1738.2" x2="2483.5" y2="1738.2"/></g>
<g fill="none" stroke="#e6e6e6" stroke-width="1.5"><rect x="2525" y="1725.5" width="20.5" height="19"/><rect x="2529" y="1729" width="12.5" height="12"/><line x1="2531.5" y1="1732.5" x2="2539" y2="1732.5"/><line x1="2531.5" y1="1735.5" x2="2539" y2="1735.5"/><line x1="2531.5" y1="1738.5" x2="2539" y2="1738.5"/></g>
<g fill="none" stroke="#e6e6e6" stroke-width="1.6"><path d="M2584.5 1744.5 L2584.5 1725.5 L2605 1725.5 L2605 1744.5 Z"/><path d="M2590 1725.5 L2590 1736 L2599.5 1736 L2599.5 1725.5"/></g>
<line x1="2633.0" y1="1734.5" x2="2644.7" y2="1734.5" stroke="#d0d0d0" stroke-width="1.5" />
<line x1="2653.0" y1="1734.5" x2="2800.0" y2="1734.5" stroke="#8a8a8a" stroke-width="1.3" />
<rect x="2726.7" y="1725.7" width="7.7" height="17.3" rx="1.5" fill="#9b9b9b"/>
<line x1="2808.6" y1="1734.5" x2="2820.6" y2="1734.5" stroke="#d0d0d0" stroke-width="1.5" />
<line x1="2814.6" y1="1728.5" x2="2814.6" y2="1740.5" stroke="#d0d0d0" stroke-width="1.5" />
<text x="2840.0" y="1741.0" font-size="17" fill="#e6e6e6" textLength="38.5" lengthAdjust="spacingAndGlyphs">115%</text>
</svg></body></html>
